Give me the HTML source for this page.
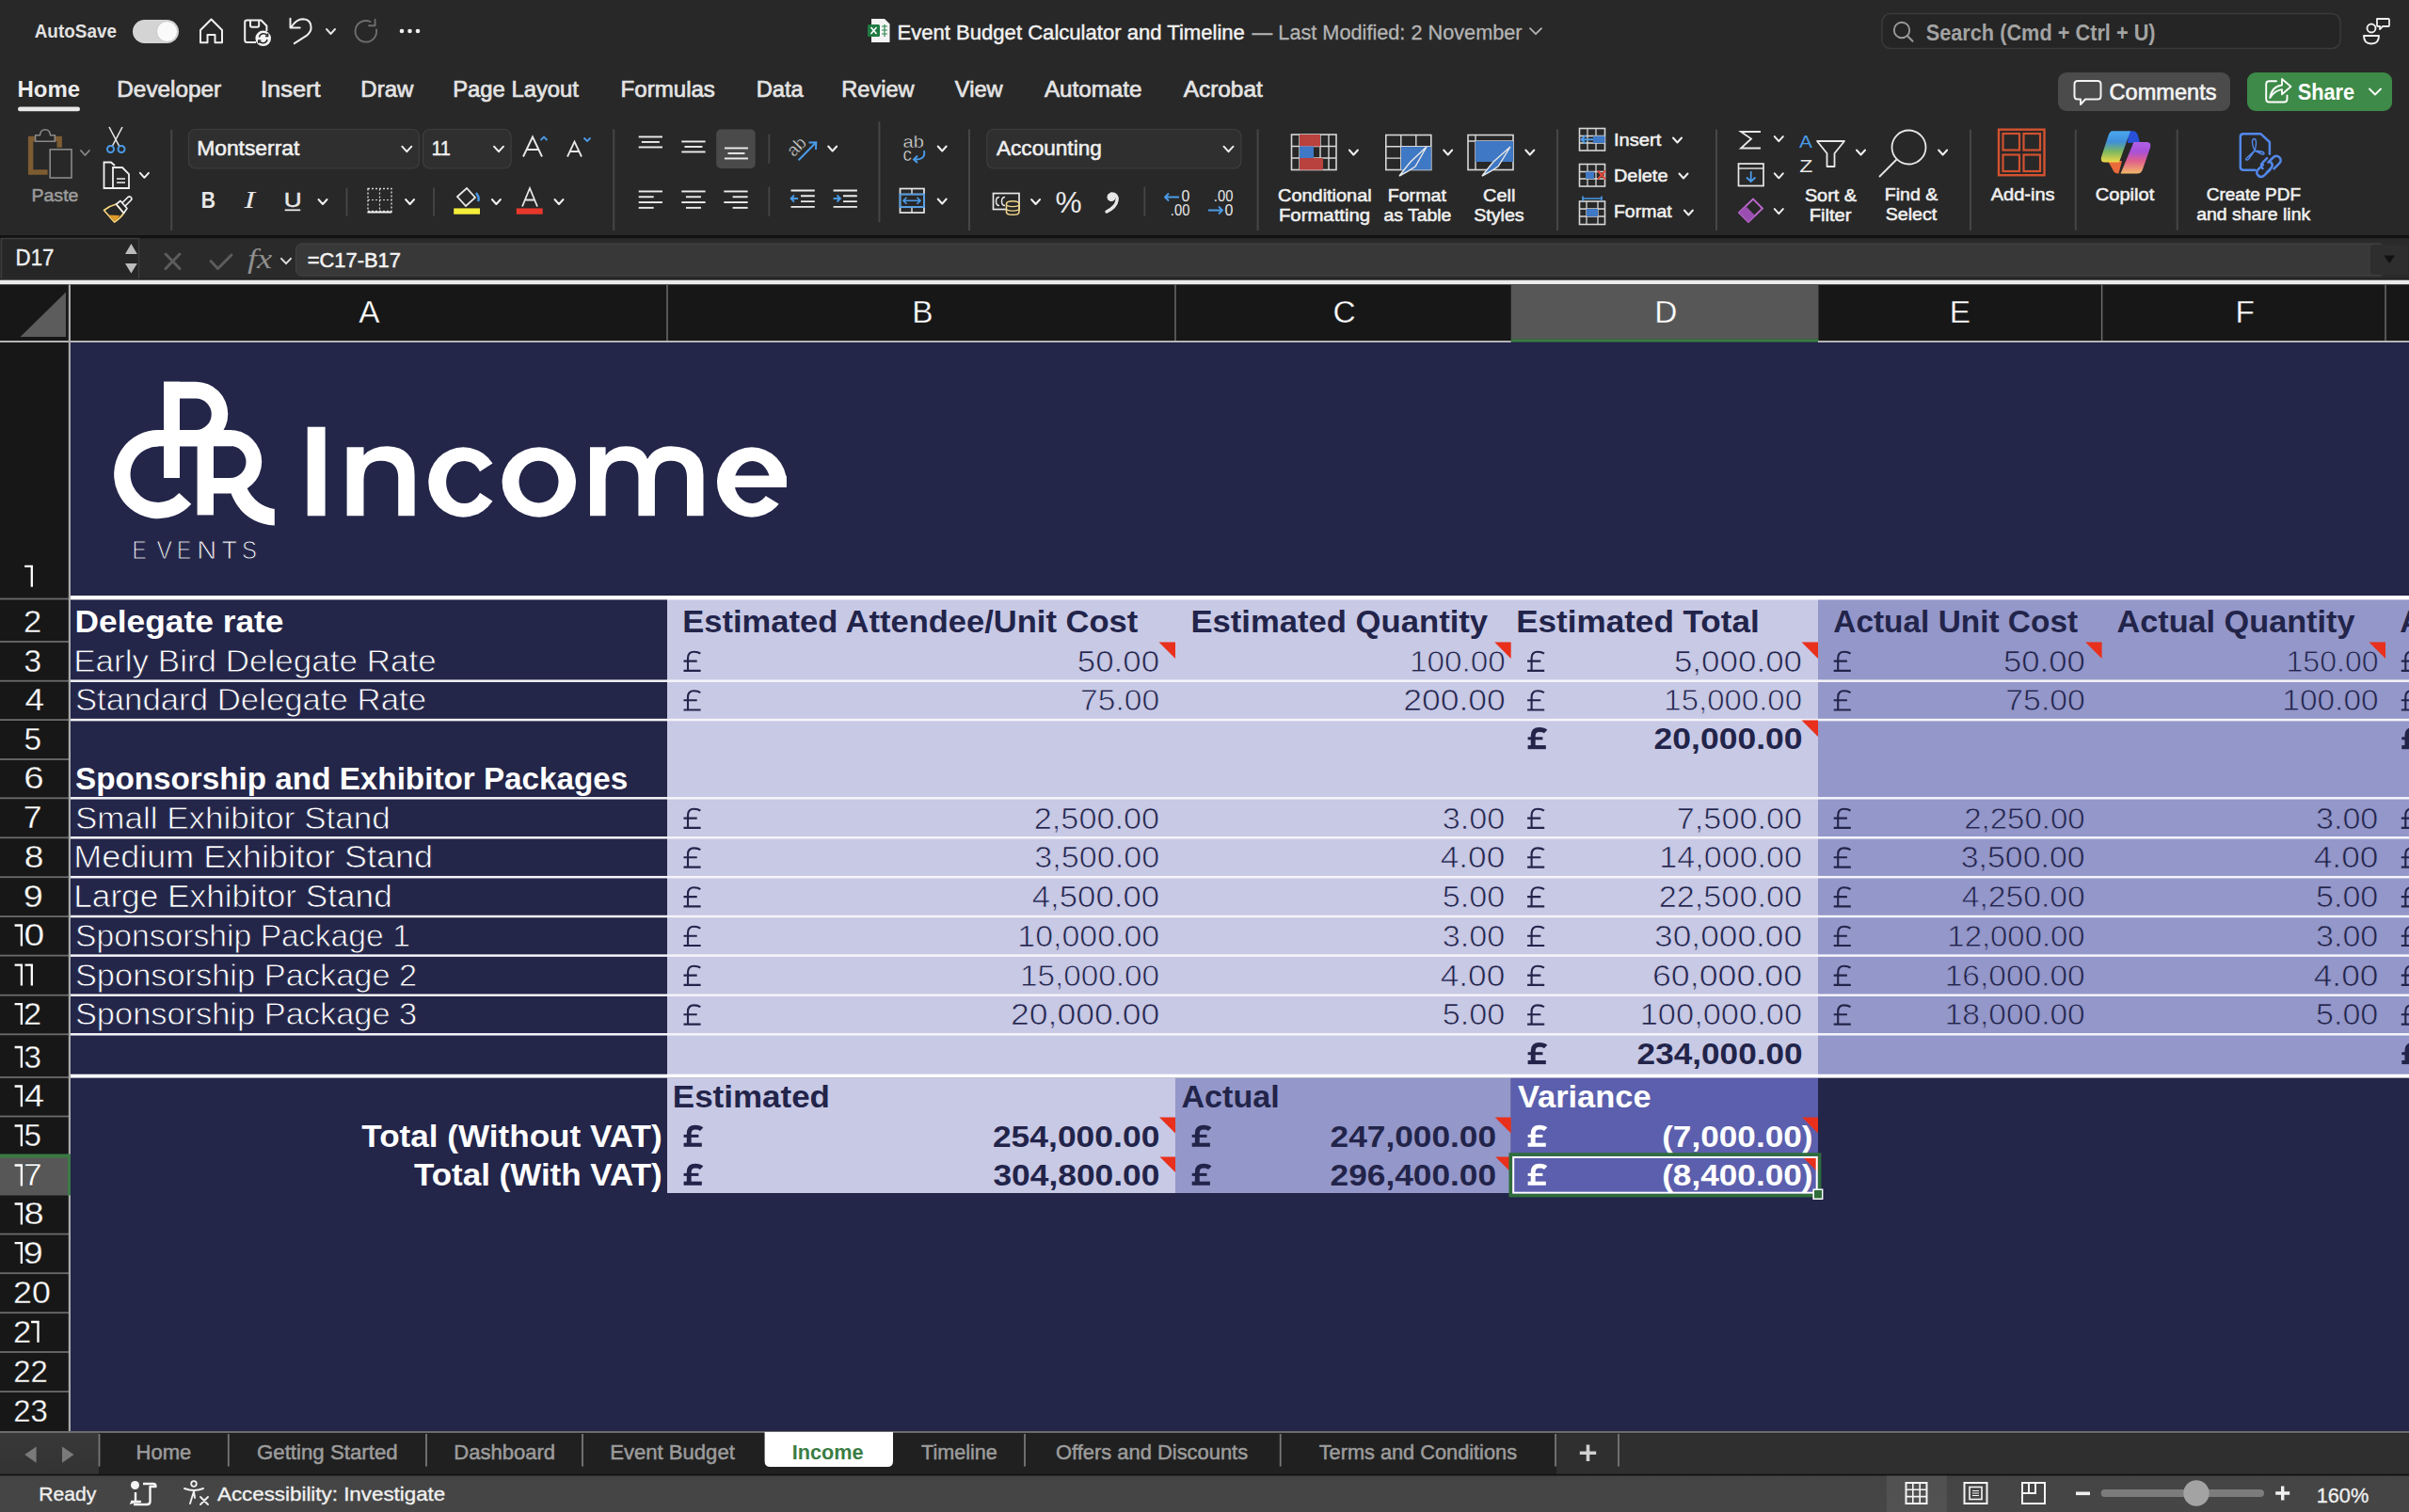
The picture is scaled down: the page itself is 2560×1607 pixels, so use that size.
<!DOCTYPE html>
<html><head><meta charset="utf-8"><title>Income - Excel</title>
<style>html,body{margin:0;padding:0;background:#282828;overflow:hidden;width:2560px;height:1607px}svg{display:block}</style></head>
<body><svg width="2560" height="1607" viewBox="0 0 2560 1607">
<rect x="0.00" y="0.00" width="2560.00" height="250.00" fill="#282828" />
<text transform="translate(36.70,40.00) scale(0.9369,1)" font-family='"Liberation Sans"' font-size="20.20" fill="#e2e2e2" font-weight="bold">AutoSave</text>
<rect x="141" y="21" width="49" height="25" rx="12.5" fill="#d4d4d4"/>
<circle cx="177.5" cy="33.5" r="11" fill="#fafafa" stroke="#bdbdbd" stroke-width="0.8"/>
<path d="M213,45.3 L213,32 L224.5,20.5 L236,32 L236,45.3 L228.5,45.3 L228.5,37 L220.5,37 L220.5,45.3 Z" fill="none" stroke="#f0f0f0" stroke-width="2" stroke-linejoin="round"/>
<path d="M272,45 L262.5,45 Q260.2,45 260.2,42.5 L260.2,23.8 Q260.2,21.5 262.5,21.5 L277.5,21.5 L283.4,27.5 L283.4,33" fill="none" stroke="#f0f0f0" stroke-width="2" stroke-linejoin="round"/><path d="M266,21.5 L266,27 Q266,28.7 267.7,28.7 L273.5,28.7 Q275.2,28.7 275.2,27 L275.2,21.5" fill="none" stroke="#f0f0f0" stroke-width="2"/><circle cx="279.7" cy="40.8" r="8.3" fill="#f4f4f4"/><path d="M275.4,39.5 Q276.5,35.8 280,35.8 Q282.5,35.8 283.8,37.5 M284,42 Q282.9,45.8 279.4,45.8 Q276.9,45.8 275.6,44.1" fill="none" stroke="#282828" stroke-width="1.6"/><path d="M282,38.6 L284.6,38.6 L284.6,35.6 M277.4,43 L274.8,43 L274.8,46" fill="none" stroke="#282828" stroke-width="1.5"/>
<path d="M308.5,19.7 L308.5,29.4 L318.7,29.4 M309.5,28.8 Q315,20.3 322,20.3 Q330.6,20.6 330.6,29.5 Q330.6,33.5 326.5,37.3 L312.8,46.2" fill="none" stroke="#f0f0f0" stroke-width="2" stroke-linecap="round" stroke-linejoin="round"/>
<path d="M347.0,31.0 L351.5,36.0 L356.0,31.0" fill="none" stroke="#e0e0e0" stroke-width="2" stroke-linecap="round" stroke-linejoin="round"/>
<path d="M400,31.5 A11.3,11.3 0 1 1 393.5,23" fill="none" stroke="#6e6e6e" stroke-width="1.9" stroke-linecap="round"/><path d="M398.6,20.8 L398.6,27.3 L392.1,27.3" fill="none" stroke="#6e6e6e" stroke-width="1.9" stroke-linecap="round" stroke-linejoin="round"/>
<circle cx="427" cy="33" r="2.3" fill="#f0f0f0"/>
<circle cx="435.5" cy="33" r="2.3" fill="#f0f0f0"/>
<circle cx="444" cy="33" r="2.3" fill="#f0f0f0"/>
<path d="M926,20 L940,20 L945.5,25.5 L945.5,45 L926,45 Z" fill="#f4f4f4"/><rect x="922" y="26" width="13" height="13" rx="1.5" fill="#1f7a43"/><path d="M925.5,29 L931.5,36 M931.5,29 L925.5,36" stroke="#fff" stroke-width="1.6"/><path d="M937,28 h6 M937,32 h6 M937,36 h6 M940,26 v13" stroke="#2d8a4e" stroke-width="1.2"/>
<text transform="translate(953.47,41.50) scale(0.9833,1)" font-family='"Liberation Sans"' font-size="22.47" fill="#f2f2f2" stroke="#f2f2f2" stroke-width="0.45">Event Budget Calculator and Timeline</text>
<text transform="translate(1330.60,41.50) scale(0.9662,1)" font-family='"Liberation Sans"' font-size="22.47" fill="#b4b4b4" stroke="#b4b4b4" stroke-width="0.3">— Last Modified: 2 November</text>
<path d="M1626.0,30.2 L1632.0,36.2 L1638.0,30.2" fill="none" stroke="#b4b4b4" stroke-width="1.8" stroke-linecap="round" stroke-linejoin="round"/>
<rect x="2000" y="14.5" width="487" height="37" rx="9" fill="#252525" stroke="#3a3a3a" stroke-width="1.5"/>
<circle cx="2021" cy="32" r="8.2" fill="none" stroke="#9a9a9a" stroke-width="1.9"/><path d="M2026.8,38 L2032.5,43.8" stroke="#9a9a9a" stroke-width="2" stroke-linecap="round"/>
<text transform="translate(2046.66,42.90) scale(0.9102,1)" font-family='"Liberation Sans"' font-size="23.89" fill="#a3a3a3" font-weight="bold">Search (Cmd + Ctrl + U)</text>
<circle cx="2520" cy="30" r="4.5" fill="none" stroke="#f0f0f0" stroke-width="1.9"/><path d="M2512,38 L2528,38 Q2528,46.5 2520,46.5 Q2512,46.5 2512,38 Z" fill="none" stroke="#f0f0f0" stroke-width="1.9" stroke-linejoin="round"/><path d="M2526,20 L2538,20 Q2539,20 2539,21 L2539,27 Q2539,28 2538,28 L2532,28 L2529,31 L2529,28 L2527,28 Q2526,28 2526,27 Z" fill="none" stroke="#f0f0f0" stroke-width="1.8" stroke-linejoin="round"/>
<text transform="translate(18.50,103.00) scale(0.9914,1)" font-family='"Liberation Sans"' font-size="24.18" fill="#ececec" font-weight="bold">Home</text>
<text transform="translate(124.30,103.00) scale(1.0065,1)" font-family='"Liberation Sans"' font-size="24.18" fill="#e4e4e4" stroke="#e4e4e4" stroke-width="0.7">Developer</text>
<text transform="translate(277.02,103.00) scale(1.0501,1)" font-family='"Liberation Sans"' font-size="24.18" fill="#e4e4e4" stroke="#e4e4e4" stroke-width="0.7">Insert</text>
<text transform="translate(383.32,103.00) scale(0.9941,1)" font-family='"Liberation Sans"' font-size="24.18" fill="#e4e4e4" stroke="#e4e4e4" stroke-width="0.7">Draw</text>
<text transform="translate(481.14,103.00) scale(0.9853,1)" font-family='"Liberation Sans"' font-size="24.18" fill="#e4e4e4" stroke="#e4e4e4" stroke-width="0.7">Page Layout</text>
<text transform="translate(659.62,103.00) scale(0.9958,1)" font-family='"Liberation Sans"' font-size="24.18" fill="#e4e4e4" stroke="#e4e4e4" stroke-width="0.7">Formulas</text>
<text transform="translate(803.75,103.00) scale(0.9790,1)" font-family='"Liberation Sans"' font-size="24.18" fill="#e4e4e4" stroke="#e4e4e4" stroke-width="0.7">Data</text>
<text transform="translate(894.36,103.00) scale(0.9745,1)" font-family='"Liberation Sans"' font-size="24.18" fill="#e4e4e4" stroke="#e4e4e4" stroke-width="0.7">Review</text>
<text transform="translate(1014.80,103.00) scale(0.9777,1)" font-family='"Liberation Sans"' font-size="24.18" fill="#e4e4e4" stroke="#e4e4e4" stroke-width="0.7">View</text>
<text transform="translate(1110.00,103.00)" font-family='"Liberation Sans"' font-size="24.18" fill="#e4e4e4" stroke="#e4e4e4" stroke-width="0.7">Automate</text>
<text transform="translate(1257.70,103.00) scale(1.0095,1)" font-family='"Liberation Sans"' font-size="24.18" fill="#e4e4e4" stroke="#e4e4e4" stroke-width="0.7">Acrobat</text>
<rect x="19" y="113.6" width="66" height="4.6" rx="2.3" fill="#e8e8e8"/>
<rect x="2187" y="77" width="183" height="41" rx="9" fill="#4b4b4b"/>
<path d="M2208,86 L2229,86 Q2232.5,86 2232.5,89.5 L2232.5,102 Q2232.5,105.5 2229,105.5 L2216,105.5 L2211,111 L2211,105.5 L2208,105.5 Q2204.5,105.5 2204.5,102 L2204.5,89.5 Q2204.5,86 2208,86 Z" fill="none" stroke="#f2f2f2" stroke-width="2" stroke-linejoin="round"/>
<text transform="translate(2241.60,106.10) scale(1.0167,1)" font-family='"Liberation Sans"' font-size="23.18" fill="#f4f4f4" stroke="#f4f4f4" stroke-width="0.6">Comments</text>
<rect x="2388" y="77" width="154" height="41" rx="9" fill="#3e8a48"/>
<path d="M2419,86.3 L2411.5,86.3 Q2408.2,86.3 2408.2,89.6 L2408.2,105.2 Q2408.2,108.5 2411.5,108.5 L2427.2,108.5 Q2430.5,108.5 2430.5,105.2 L2430.5,101.5" fill="none" stroke="#fff" stroke-width="1.9" stroke-linecap="round"/><path d="M2412.3,104 Q2414,92 2425,90.5 L2425,84 L2434.5,92 L2425,100.3 L2425,95.2 Q2417.5,96 2412.3,104 Z" fill="none" stroke="#fff" stroke-width="1.8" stroke-linejoin="round"/>
<text transform="translate(2441.66,106.10) scale(0.9403,1)" font-family='"Liberation Sans"' font-size="23.18" fill="#ffffff" font-weight="bold">Share</text>
<path d="M2518.0,94.5 L2524.0,100.5 L2530.0,94.5" fill="none" stroke="#ffffff" stroke-width="1.8" stroke-linecap="round" stroke-linejoin="round"/>
<path d="M37.5,147.5 L32.6,147.5 L32.6,183 L50.6,183 M58.5,147.5 L63.2,147.5 L63.2,156.7" fill="none" stroke="#7d5c32" stroke-width="5.4"/>
<path d="M37.6,150.2 L37.6,143.8 L42.5,143.8 Q43,137.8 48,137.8 Q53,137.8 53.5,143.8 L58.3,143.8 L58.3,150.2 Z" fill="#282828" stroke="#8a8a8a" stroke-width="1.5"/><rect x="53.2" y="158.8" width="22.8" height="30.2" fill="#282828" stroke="#8a8a8a" stroke-width="1.6"/>
<path d="M85.9,160.0 L90.4,165.0 L94.9,160.0" fill="none" stroke="#8a8a8a" stroke-width="1.8" stroke-linecap="round" stroke-linejoin="round"/>
<text transform="translate(33.47,214.00) scale(1.0745,1)" font-family='"Liberation Sans"' font-size="18.20" fill="#9c9c9c" stroke="#9c9c9c" stroke-width="0.5">Paste</text>
<path d="M116,135 L126.5,155 M130,135 L119.5,155" stroke="#e8e8e8" stroke-width="1.6"/><circle cx="117.5" cy="158.5" r="3.5" fill="none" stroke="#4a9be8" stroke-width="2"/><circle cx="129" cy="158.5" r="3.5" fill="none" stroke="#4a9be8" stroke-width="2"/>
<path d="M121,200 L110.5,200 L110.5,172.5 L118,172.5 L122,176" fill="none" stroke="#f0f0f0" stroke-width="1.8"/><path d="M120,178 L130,178 L137,185 L137,200 L120,200 Z" fill="#282828" stroke="#f0f0f0" stroke-width="1.8"/><path d="M124,190 h9 M124,194 h9" stroke="#f0f0f0" stroke-width="1.4"/>
<path d="M148.9,183.8 L153.4,188.8 L157.9,183.8" fill="none" stroke="#f0f0f0" stroke-width="2" stroke-linecap="round" stroke-linejoin="round"/>
<path d="M110.5,223.5 Q117,218.5 123.5,217 L131.5,226.5 Q128,232 121.5,236 Z" fill="none" stroke="#f2d27a" stroke-width="1.7" stroke-linejoin="round"/><path d="M115.5,228.5 L127.5,229 Q125,233 121.5,235 Z" fill="#e09a2a"/><path d="M123.5,217 L128,213.5 L135,221.5 L131.5,226.5 Z" fill="none" stroke="#f0f0f0" stroke-width="1.7" stroke-linejoin="round"/><path d="M129.5,216 L136,209.5 Q138,208 139.5,210 Q140.5,211.5 139,213 L132.5,219.5" fill="none" stroke="#f0f0f0" stroke-width="1.7" stroke-linejoin="round"/>
<rect x="181.20" y="138.00" width="2.00" height="107.00" fill="#464646" />
<rect x="200.5" y="137.5" width="245" height="41.5" rx="7" fill="#2f2f2f" stroke="#3e3e3e" stroke-width="1.2"/>
<text transform="translate(209.22,165.20) scale(1.0560,1)" font-family='"Liberation Sans"' font-size="21.62" fill="#f0f0f0" stroke="#f0f0f0" stroke-width="0.55">Montserrat</text>
<path d="M427.3,155.7 L432.3,161.2 L437.3,155.7" fill="none" stroke="#f0f0f0" stroke-width="2" stroke-linecap="round" stroke-linejoin="round"/>
<rect x="449.5" y="137.5" width="93.5" height="41.5" rx="7" fill="#2f2f2f" stroke="#3e3e3e" stroke-width="1.2"/>
<text transform="translate(458.80,165.20) scale(0.8905,1)" font-family='"Liberation Sans"' font-size="21.62" fill="#f0f0f0" stroke="#f0f0f0" stroke-width="0.55">11</text>
<path d="M525.0,155.7 L530.0,161.2 L535.0,155.7" fill="none" stroke="#f0f0f0" stroke-width="2" stroke-linecap="round" stroke-linejoin="round"/>
<path d="M556,166.5 L566,145.5 L576,166.5 M559.5,159 L572.5,159" fill="none" stroke="#e8e8e8" stroke-width="1.9"/><path d="M574.5,149 L578,145.5 L581.5,149" fill="none" stroke="#4a9be8" stroke-width="1.8"/>
<path d="M603,166.5 L610.5,150.5 L618,166.5 M605.5,161 L615.5,161" fill="none" stroke="#e8e8e8" stroke-width="1.8"/><path d="M620.5,146.5 L624,150 L627.5,146.5" fill="none" stroke="#4a9be8" stroke-width="1.8"/>
<rect x="651.20" y="137.40" width="2.00" height="107.60" fill="#464646" />
<text transform="translate(213.68,220.80) scale(0.8735,1)" font-family='"Liberation Sans"' font-size="24.18" fill="#e8e8e8" font-weight="bold">B</text>
<text transform="translate(259.54,220.80) scale(1.3341,1)" font-family='"Liberation Serif"' font-size="25.90" fill="#e8e8e8" font-style="italic">I</text>
<text transform="translate(301.87,219.50) scale(1.1472,1)" font-family='"Liberation Sans"' font-size="22.76" fill="#e8e8e8" stroke="#e8e8e8" stroke-width="0.4">U</text>
<rect x="302.70" y="222.40" width="16.50" height="1.80" fill="#e8e8e8" />
<path d="M338.5,212.0 L343.0,217.0 L347.5,212.0" fill="none" stroke="#f0f0f0" stroke-width="2" stroke-linecap="round" stroke-linejoin="round"/>
<rect x="367.60" y="199.50" width="1.80" height="30.10" fill="#464646" />
<rect x="391" y="200.5" width="25" height="24" fill="none" stroke="#d8d8d8" stroke-width="1.4" stroke-dasharray="2 2"/><path d="M403.5,200.5 v24 M391,212.5 h25" stroke="#d8d8d8" stroke-width="1.2" stroke-dasharray="2 2"/><path d="M390.4,225.5 h26" stroke="#f0f0f0" stroke-width="2"/>
<path d="M431.1,212.0 L435.6,217.0 L440.1,212.0" fill="none" stroke="#f0f0f0" stroke-width="2" stroke-linecap="round" stroke-linejoin="round"/>
<rect x="460.20" y="199.50" width="1.80" height="30.10" fill="#464646" />
<path d="M486,209 L496,200 L505,210 L495,219 Z" fill="none" stroke="#e8e8e8" stroke-width="1.8"/><path d="M506,205 Q510,210 508,214" fill="none" stroke="#4a9be8" stroke-width="2.4"/>
<rect x="482.20" y="221.40" width="27.80" height="6.30" fill="#f5ee3a" />
<path d="M522.9,212.0 L527.4,217.0 L531.9,212.0" fill="none" stroke="#f0f0f0" stroke-width="2" stroke-linecap="round" stroke-linejoin="round"/>
<path d="M555,219.5 L563,200 L571,219.5 M558,212.5 L568,212.5" fill="none" stroke="#e8e8e8" stroke-width="1.8"/>
<rect x="548.80" y="221.40" width="27.90" height="6.30" fill="#e8382c" />
<path d="M589.5,212.0 L594.0,217.0 L598.5,212.0" fill="none" stroke="#f0f0f0" stroke-width="2" stroke-linecap="round" stroke-linejoin="round"/>
<rect x="678.70" y="144.50" width="25.30" height="1.90" fill="#ececec" />
<rect x="681.85" y="150.00" width="19.00" height="1.90" fill="#ececec" />
<rect x="678.70" y="155.50" width="25.30" height="1.90" fill="#ececec" />
<rect x="724.30" y="149.50" width="25.30" height="1.90" fill="#ececec" />
<rect x="727.45" y="155.00" width="19.00" height="1.90" fill="#ececec" />
<rect x="724.30" y="160.50" width="25.30" height="1.90" fill="#ececec" />
<rect x="761.2" y="137.4" width="41.5" height="41.6" rx="5" fill="#4a4a4a"/>
<rect x="769.95" y="156.50" width="25.00" height="1.90" fill="#ececec" />
<rect x="773.45" y="162.00" width="18.00" height="1.90" fill="#ececec" />
<rect x="769.95" y="167.50" width="25.00" height="1.90" fill="#ececec" />
<rect x="816.40" y="142.70" width="1.80" height="31.10" fill="#464646" />
<text x="0" y="0" transform="translate(843.5,167.5) rotate(-45)" font-family='"Liberation Sans"' font-size="18.5" fill="#e8e8e8" stroke="#282828" stroke-width="0.5">ab</text><path d="M848.6,170.2 L867,151.5 M859.5,151.5 L867.3,151.2 L867,159" fill="none" stroke="#4a9be8" stroke-width="2"/>
<path d="M880.2,155.5 L884.7,160.5 L889.2,155.5" fill="none" stroke="#f0f0f0" stroke-width="2" stroke-linecap="round" stroke-linejoin="round"/>
<rect x="933.40" y="129.30" width="2.00" height="106.90" fill="#464646" />
<text transform="translate(959.58,157.40) scale(1.0896,1)" font-family='"Liberation Sans"' font-size="18.35" fill="#e8e8e8" stroke="#282828" stroke-width="0.459">ab</text>
<text transform="translate(959.41,170.70) scale(0.9379,1)" font-family='"Liberation Sans"' font-size="20.00" fill="#e8e8e8" stroke="#282828" stroke-width="0.533">c</text>
<path d="M982,160 Q984,170 972,169.5 M975,165.5 L971,169.5 L975,173" fill="none" stroke="#4a9be8" stroke-width="1.9"/>
<path d="M996.7,155.5 L1001.2,160.5 L1005.7,155.5" fill="none" stroke="#f0f0f0" stroke-width="2" stroke-linecap="round" stroke-linejoin="round"/>
<rect x="678.70" y="202.50" width="25.30" height="1.90" fill="#ececec" />
<rect x="678.70" y="208.30" width="16.00" height="1.90" fill="#ececec" />
<rect x="678.70" y="214.10" width="25.30" height="1.90" fill="#ececec" />
<rect x="678.70" y="219.90" width="16.00" height="1.90" fill="#ececec" />
<rect x="724.30" y="202.50" width="25.30" height="1.90" fill="#ececec" />
<rect x="728.95" y="208.30" width="16.00" height="1.90" fill="#ececec" />
<rect x="724.30" y="214.10" width="25.30" height="1.90" fill="#ececec" />
<rect x="728.95" y="219.90" width="16.00" height="1.90" fill="#ececec" />
<rect x="769.30" y="202.50" width="25.30" height="1.90" fill="#ececec" />
<rect x="778.60" y="208.30" width="16.00" height="1.90" fill="#ececec" />
<rect x="769.30" y="214.10" width="25.30" height="1.90" fill="#ececec" />
<rect x="778.60" y="219.90" width="16.00" height="1.90" fill="#ececec" />
<rect x="816.40" y="198.50" width="1.80" height="31.30" fill="#464646" />
<path d="M840.5,202.5 h25.3 M851,208.3 h14.8 M851,214.1 h14.8 M840.5,219.9 h25.3" stroke="#ececec" stroke-width="1.9"/><path d="M848,211 h-7 M844,207.5 L840.5,211 L844,214.5" fill="none" stroke="#4a9be8" stroke-width="1.8"/>
<path d="M885.6,202.5 h25.3 M896,208.3 h14.8 M896,214.1 h14.8 M885.6,219.9 h25.3" stroke="#ececec" stroke-width="1.9"/><path d="M885.6,211 h7 M889.5,207.5 L893,211 L889.5,214.5" fill="none" stroke="#4a9be8" stroke-width="1.8"/>
<rect x="956.5" y="200.5" width="25.5" height="25.5" fill="none" stroke="#e8e8e8" stroke-width="1.7"/><path d="M956.5,206.5 h25.5 M956.5,220 h25.5 M969,200.5 v6 M969,220 v6" stroke="#e8e8e8" stroke-width="1.4"/><rect x="956.5" y="206.5" width="25.5" height="13.5" fill="none" stroke="#4a9be8" stroke-width="1.7"/><path d="M960,213.2 h18 M963.5,209.8 L960,213.2 L963.5,216.6 M974.5,209.8 L978,213.2 L974.5,216.6" fill="none" stroke="#4a9be8" stroke-width="1.6"/>
<path d="M996.7,211.5 L1001.2,216.5 L1005.7,211.5" fill="none" stroke="#f0f0f0" stroke-width="2" stroke-linecap="round" stroke-linejoin="round"/>
<rect x="1029.00" y="137.40" width="2.00" height="107.60" fill="#464646" />
<rect x="1048.8" y="137.5" width="270" height="41.5" rx="7" fill="#2f2f2f" stroke="#3e3e3e" stroke-width="1.2"/>
<text transform="translate(1059.00,165.20) scale(1.0450,1)" font-family='"Liberation Sans"' font-size="21.62" fill="#f0f0f0" stroke="#f0f0f0" stroke-width="0.55">Accounting</text>
<path d="M1300.5,155.7 L1305.5,161.2 L1310.5,155.7" fill="none" stroke="#f0f0f0" stroke-width="2" stroke-linecap="round" stroke-linejoin="round"/>
<rect x="1055.5" y="205.5" width="27.5" height="17" fill="none" stroke="#e8e8e8" stroke-width="1.7"/><path d="M1062,209.5 Q1058.5,209.5 1058.5,214 Q1058.5,218.5 1062,218.5 M1068,209.5 Q1064.5,209.5 1064.5,214 Q1064.5,218.5 1068,218.5" fill="none" stroke="#e8e8e8" stroke-width="1.5"/>
<path d="M1069.5,216.5 L1069.5,225.5 Q1069.5,228.3 1076.2,228.3 Q1082.9,228.3 1082.9,225.5 L1082.9,216.5 Q1082.9,213.7 1076.2,213.7 Q1069.5,213.7 1069.5,216.5 Z" fill="#282828" stroke="#f0d68a" stroke-width="1.6"/><path d="M1069.5,218.3 Q1076.2,221 1082.9,218.3 M1069.5,222.8 Q1076.2,225.5 1082.9,222.8" fill="none" stroke="#f0d68a" stroke-width="1.3"/>
<path d="M1096.1,212.0 L1100.6,217.0 L1105.1,212.0" fill="none" stroke="#f0f0f0" stroke-width="2" stroke-linecap="round" stroke-linejoin="round"/>
<text transform="translate(1121.41,226.00) scale(1.0111,1)" font-family='"Liberation Sans"' font-size="31.29" fill="#e8e8e8">%</text>
<path d="M1181,206 Q1188,206 1187,213 Q1186,220 1176,225" fill="none" stroke="#e8e8e8" stroke-width="3.4" stroke-linecap="round"/><circle cx="1181" cy="209.5" r="4.5" fill="#e8e8e8"/>
<rect x="1215.40" y="198.50" width="1.80" height="31.30" fill="#464646" />
<text transform="translate(1255.50,214.00) scale(1.0227,1)" font-family='"Liberation Sans"' font-size="15.64" fill="#e8e8e8">0</text>
<text transform="translate(1243.85,228.50) scale(0.9436,1)" font-family='"Liberation Sans"' font-size="15.64" fill="#e8e8e8">.00</text>
<path d="M1253,209.5 h-15 M1242,205.5 L1238,209.5 L1242,213.5" fill="none" stroke="#4a9be8" stroke-width="1.8"/>
<text transform="translate(1289.85,214.00) scale(0.9436,1)" font-family='"Liberation Sans"' font-size="15.64" fill="#e8e8e8">.00</text>
<text transform="translate(1301.50,228.50) scale(1.0227,1)" font-family='"Liberation Sans"' font-size="15.64" fill="#e8e8e8">0</text>
<path d="M1284,223.5 h15 M1295,219.5 L1299,223.5 L1295,227.5" fill="none" stroke="#4a9be8" stroke-width="1.8"/>
<rect x="1335.60" y="137.40" width="2.00" height="107.60" fill="#464646" />
<rect x="1372.5" y="143" width="47.5" height="37.5" fill="none" stroke="#d8d8d8" stroke-width="1.6"/><path d="M1381,143 v37.5 M1403,143 v37.5 M1412,143 v37.5 M1372.5,155.5 h47.5 M1372.5,168 h47.5" stroke="#d8d8d8" stroke-width="1.4"/><rect x="1381" y="143" width="22" height="12.5" fill="#b9413e"/><rect x="1381" y="155.5" width="15" height="12.5" fill="#3f78c4"/><rect x="1381" y="168" width="25" height="12.5" fill="#b9413e"/>
<path d="M1433.9,159.5 L1438.4,164.5 L1442.9,159.5" fill="none" stroke="#f0f0f0" stroke-width="2" stroke-linecap="round" stroke-linejoin="round"/>
<text transform="translate(1358.07,214.40) scale(1.0529,1)" font-family='"Liberation Sans"' font-size="18.92" fill="#f0f0f0" stroke="#f0f0f0" stroke-width="0.55">Conditional</text>
<text transform="translate(1358.91,234.80) scale(1.0755,1)" font-family='"Liberation Sans"' font-size="18.92" fill="#f0f0f0" stroke="#f0f0f0" stroke-width="0.55">Formatting</text>
<rect x="1472.8" y="143.5" width="48" height="37" fill="none" stroke="#d8d8d8" stroke-width="1.6"/><path d="M1488.8,143.5 v37 M1504.8,143.5 v37 M1472.8,155.8 h48 M1472.8,168.1 h48" stroke="#d8d8d8" stroke-width="1.4"/><rect x="1489" y="156" width="31.8" height="24.5" fill="#3f78c4"/><path d="M1516,156 L1504,177 Q1497,182 1487,187 Q1494,178 1499,172 Z" fill="#3f78c4" stroke="#e8e8e8" stroke-width="1.4"/>
<path d="M1534.2,159.5 L1538.7,164.5 L1543.2,159.5" fill="none" stroke="#f0f0f0" stroke-width="2" stroke-linecap="round" stroke-linejoin="round"/>
<text transform="translate(1474.66,214.40) scale(1.0395,1)" font-family='"Liberation Sans"' font-size="18.92" fill="#f0f0f0" stroke="#f0f0f0" stroke-width="0.55">Format</text>
<text transform="translate(1470.39,234.80) scale(1.0276,1)" font-family='"Liberation Sans"' font-size="18.92" fill="#f0f0f0" stroke="#f0f0f0" stroke-width="0.55">as Table</text>
<rect x="1560" y="143.5" width="48" height="37" fill="none" stroke="#d8d8d8" stroke-width="1.6"/><path d="M1568,143.5 v37 M1560,150 h48" stroke="#d8d8d8" stroke-width="1.4"/><rect x="1568" y="150" width="40" height="22" fill="#3f78c4"/><path d="M1605,156 L1592,177 Q1585,182 1575,187 Q1582,178 1587,172 Z" fill="#3f78c4" stroke="#e8e8e8" stroke-width="1.4"/>
<path d="M1621.3,159.5 L1625.8,164.5 L1630.3,159.5" fill="none" stroke="#f0f0f0" stroke-width="2" stroke-linecap="round" stroke-linejoin="round"/>
<text transform="translate(1576.07,214.40) scale(1.0509,1)" font-family='"Liberation Sans"' font-size="18.92" fill="#f0f0f0" stroke="#f0f0f0" stroke-width="0.55">Cell</text>
<text transform="translate(1566.19,234.80) scale(1.0372,1)" font-family='"Liberation Sans"' font-size="18.92" fill="#f0f0f0" stroke="#f0f0f0" stroke-width="0.55">Styles</text>
<rect x="1654.00" y="137.40" width="2.00" height="107.60" fill="#464646" />
<rect x="1678.5" y="136.5" width="27" height="23.5" fill="none" stroke="#d8d8d8" stroke-width="1.6"/><path d="M1678.5,144.5 h27 M1678.5,152 h27 M1687,136.5 v23.5 M1696,136.5 v23.5" stroke="#d8d8d8" stroke-width="1.3"/><rect x="1693" y="144.5" width="12.5" height="7.5" fill="#3f78c4"/><path d="M1693,148.3 h-12 M1685,144 L1680.5,148.3 L1685,152.5" fill="none" stroke="#4a9be8" stroke-width="1.9"/>
<text transform="translate(1714.93,154.90) scale(1.0633,1)" font-family='"Liberation Sans"' font-size="18.92" fill="#f0f0f0" stroke="#f0f0f0" stroke-width="0.55">Insert</text>
<path d="M1778.0,146.5 L1782.5,151.5 L1787.0,146.5" fill="none" stroke="#f0f0f0" stroke-width="2" stroke-linecap="round" stroke-linejoin="round"/>
<rect x="1678.5" y="174.5" width="27" height="23.5" fill="none" stroke="#d8d8d8" stroke-width="1.6"/><path d="M1678.5,182.5 h27 M1678.5,190 h27 M1687,174.5 v23.5 M1696,174.5 v23.5" stroke="#d8d8d8" stroke-width="1.3"/><rect x="1685" y="182.5" width="9" height="7.5" fill="#3f78c4"/><path d="M1698,181.5 L1706,190.5 M1706,181.5 L1698,190.5" stroke="#e04a3a" stroke-width="2"/>
<text transform="translate(1714.94,192.70) scale(1.0528,1)" font-family='"Liberation Sans"' font-size="18.92" fill="#f0f0f0" stroke="#f0f0f0" stroke-width="0.55">Delete</text>
<path d="M1784.5,184.5 L1789.0,189.5 L1793.5,184.5" fill="none" stroke="#f0f0f0" stroke-width="2" stroke-linecap="round" stroke-linejoin="round"/>
<rect x="1678.5" y="214" width="27" height="24.5" fill="none" stroke="#d8d8d8" stroke-width="1.6"/><path d="M1678.5,222 h27 M1678.5,230 h27 M1686,214 v24.5 M1698,214 v24.5" stroke="#d8d8d8" stroke-width="1.3"/><rect x="1686" y="222" width="12" height="8" fill="#3f78c4"/><path d="M1682,211 h20 M1682,208.5 v5 M1702,208.5 v5" stroke="#4a9be8" stroke-width="1.6"/>
<text transform="translate(1714.98,231.30) scale(1.0292,1)" font-family='"Liberation Sans"' font-size="18.92" fill="#f0f0f0" stroke="#f0f0f0" stroke-width="0.55">Format</text>
<path d="M1789.9,223.5 L1794.4,228.5 L1798.9,223.5" fill="none" stroke="#f0f0f0" stroke-width="2" stroke-linecap="round" stroke-linejoin="round"/>
<rect x="1823.00" y="137.40" width="2.00" height="107.60" fill="#464646" />
<path d="M1871,140 L1850,140 L1861,147.5 L1850,157.5 L1871,157.5" fill="none" stroke="#e8e8e8" stroke-width="1.8"/>
<path d="M1885.8,145.1 L1890.3,150.1 L1894.8,145.1" fill="none" stroke="#f0f0f0" stroke-width="2" stroke-linecap="round" stroke-linejoin="round"/>
<rect x="1847.5" y="174" width="26.5" height="23.5" fill="none" stroke="#e8e8e8" stroke-width="1.7"/><path d="M1847.5,179 h26.5" stroke="#e8e8e8" stroke-width="1.4"/><path d="M1860.7,182 v11 M1856,188.5 L1860.7,193 L1865.4,188.5" fill="none" stroke="#4a9be8" stroke-width="1.8"/>
<path d="M1885.8,184.3 L1890.3,189.3 L1894.8,184.3" fill="none" stroke="#f0f0f0" stroke-width="2" stroke-linecap="round" stroke-linejoin="round"/>
<path d="M1848,226 L1863,211.5 L1873,221.5 L1858,236 Z" fill="none" stroke="#c06ad0" stroke-width="1.8"/><path d="M1848,226 L1855,219 L1865,229 L1858,236 Z" fill="#9a4fb0"/>
<path d="M1885.8,222.1 L1890.3,227.1 L1894.8,222.1" fill="none" stroke="#f0f0f0" stroke-width="2" stroke-linecap="round" stroke-linejoin="round"/>
<text transform="translate(1912.00,157.00) scale(1.0853,1)" font-family='"Liberation Sans"' font-size="19.20" fill="#4a9be8">A</text>
<text transform="translate(1912.28,183.00) scale(1.2037,1)" font-family='"Liberation Sans"' font-size="19.20" fill="#e8e8e8">Z</text>
<path d="M1931,150 L1960,150 L1949.5,163 L1949.5,177 L1941.5,177 L1941.5,163 Z" fill="none" stroke="#e8e8e8" stroke-width="1.8" stroke-linejoin="round"/>
<path d="M1973.0,159.5 L1977.5,164.5 L1982.0,159.5" fill="none" stroke="#f0f0f0" stroke-width="2" stroke-linecap="round" stroke-linejoin="round"/>
<text transform="translate(1917.88,214.40) scale(1.0489,1)" font-family='"Liberation Sans"' font-size="18.92" fill="#f0f0f0" stroke="#f0f0f0" stroke-width="0.55">Sort &amp;</text>
<text transform="translate(1922.73,234.80) scale(1.0627,1)" font-family='"Liberation Sans"' font-size="18.92" fill="#f0f0f0" stroke="#f0f0f0" stroke-width="0.55">Filter</text>
<circle cx="2028.5" cy="156.5" r="18" fill="none" stroke="#e8e8e8" stroke-width="1.8"/><path d="M2015.5,169.5 L1997,188" stroke="#e8e8e8" stroke-width="1.8"/>
<path d="M2060.1,159.5 L2064.6,164.5 L2069.1,159.5" fill="none" stroke="#f0f0f0" stroke-width="2" stroke-linecap="round" stroke-linejoin="round"/>
<text transform="translate(2002.77,213.20) scale(1.0323,1)" font-family='"Liberation Sans"' font-size="18.92" fill="#f0f0f0" stroke="#f0f0f0" stroke-width="0.55">Find &amp;</text>
<text transform="translate(2003.69,234.30) scale(1.0395,1)" font-family='"Liberation Sans"' font-size="18.92" fill="#f0f0f0" stroke="#f0f0f0" stroke-width="0.55">Select</text>
<rect x="2093.00" y="137.70" width="2.00" height="107.10" fill="#464646" />
<rect x="2124" y="137.7" width="48.5" height="48.5" fill="none" stroke="#d35230" stroke-width="2.4"/><rect x="2128.5" y="142" width="17.5" height="17.5" fill="none" stroke="#d35230" stroke-width="2.2"/><rect x="2150.5" y="142" width="17.5" height="17.5" fill="none" stroke="#d35230" stroke-width="2.2"/><rect x="2128.5" y="164.5" width="17.5" height="17.5" fill="none" stroke="#d35230" stroke-width="2.2"/><rect x="2150.5" y="164.5" width="17.5" height="17.5" fill="none" stroke="#d35230" stroke-width="2.2"/>
<text transform="translate(2115.70,213.20) scale(1.0591,1)" font-family='"Liberation Sans"' font-size="18.92" fill="#f0f0f0" stroke="#f0f0f0" stroke-width="0.55">Add-ins</text>
<rect x="2204.80" y="137.70" width="2.00" height="107.10" fill="#464646" />
<defs><linearGradient id="cpA" x1="0" y1="0" x2="0" y2="1"><stop offset="0" stop-color="#4aa8f0"/><stop offset="0.35" stop-color="#3f8fd8"/><stop offset="0.65" stop-color="#7cb860"/><stop offset="1" stop-color="#f0d848"/></linearGradient><linearGradient id="cpB" x1="0" y1="0" x2="0" y2="1"><stop offset="0" stop-color="#b060e8"/><stop offset="0.3" stop-color="#a850d8"/><stop offset="0.6" stop-color="#e0608a"/><stop offset="1" stop-color="#f4b868"/></linearGradient></defs>
<path d="M2262,139.2 L2266.5,139.2 Q2270.5,139.2 2272,144 L2274,151.5 L2261,152 Z" fill="#2850d8"/><path d="M2240,171 L2255,171 L2251.5,184.6 Q2246.5,184.6 2245,180 Z" fill="#ea6a3c"/>
<path d="M2245,139.2 L2264,139.2 L2252,172.6 L2237,172.6 Q2231.5,172.6 2233,167 L2240.5,144 Q2242,139.2 2245,139.2 Z" fill="url(#cpA)"/>
<path d="M2267.5,151 L2281.5,151 Q2286.5,151 2285,157 L2277,180 Q2275.5,184.6 2271,184.6 L2253.5,184.6 Z" fill="url(#cpB)"/>
<text transform="translate(2226.76,213.20) scale(1.0610,1)" font-family='"Liberation Sans"' font-size="18.92" fill="#f0f0f0" stroke="#f0f0f0" stroke-width="0.55">Copilot</text>
<rect x="2312.70" y="137.70" width="2.00" height="107.10" fill="#464646" />
<path d="M2396.6,180.7 L2384,180.7 Q2380.8,180.7 2380.8,177.5 L2380.8,145.5 Q2380.8,142.3 2384,142.3 L2402.6,142.3 L2411.9,151 L2411.9,163.8" fill="none" stroke="#5288ea" stroke-width="2.5" stroke-linecap="round" stroke-linejoin="round"/>
<path d="M2395.4,147.5 Q2393.3,147.5 2393.5,152 Q2394,156 2396,160 L2388,167.5 Q2386,169 2387,170 Q2388.5,170.5 2390,168.5 L2396,160 L2403,163.5 Q2405.5,164.8 2406,163.5 Q2406,161.5 2403,161 L2396,160 Q2397.5,156 2397.5,152 Q2397.5,147.5 2395.4,147.5 Z" fill="none" stroke="#5288ea" stroke-width="1.4" stroke-linejoin="round"/>
<path d="M2408.3,178 L2403.5,182.8 Q2400,186.3 2403.2,189.5 Q2406.4,192.7 2410,189.2 L2416,183.3 M2414,175.5 L2419,170.5 Q2422.5,167 2425.7,170.2 Q2428.9,173.4 2425.4,176.9 L2420,182.3 M2416.7,175.5 Q2420,178.7 2416.2,182.5 L2412,186.7 M2408,182.2 Q2404.8,179 2408.6,175.2 L2412.6,171.2" fill="none" stroke="#5288ea" stroke-width="2.5" stroke-linecap="round" transform="translate(-3.5,-3)"/>
<text transform="translate(2344.71,213.20) scale(1.0045,1)" font-family='"Liberation Sans"' font-size="18.92" fill="#f0f0f0" stroke="#f0f0f0" stroke-width="0.55">Create PDF</text>
<text transform="translate(2334.19,234.30) scale(1.0283,1)" font-family='"Liberation Sans"' font-size="18.92" fill="#f0f0f0" stroke="#f0f0f0" stroke-width="0.55">and share link</text>
<rect x="0.00" y="250.00" width="2560.00" height="3.50" fill="#121212" />
<rect x="0.00" y="253.50" width="2560.00" height="44.00" fill="#2a2a2a" />
<rect x="1.5" y="253.5" width="146" height="43" fill="#262626" stroke="#3c3c3c" stroke-width="1.5"/>
<text transform="translate(16.56,282.30) scale(0.9487,1)" font-family='"Liberation Sans"' font-size="23.47" fill="#f0f0f0" stroke="#f0f0f0" stroke-width="0.4">D17</text>
<path d="M133,270 L139.4,259 L145.8,270 Z M133,280 L145.8,280 L139.4,290.6 Z" fill="#bcbcbc"/>
<path d="M176,270 L191,285.5 M191,270 L176,285.5" stroke="#5c5c5c" stroke-width="3" stroke-linecap="round"/>
<path d="M224,277.5 L231.5,285.5 L246,271" fill="none" stroke="#5c5c5c" stroke-width="3" stroke-linecap="round" stroke-linejoin="round"/>
<text transform="translate(263.00,284.50) scale(1.1926,1)" font-family='"Liberation Serif"' font-size="30.48" fill="#8e8e8e" font-style="italic">fx</text>
<path d="M299.0,274.8 L304.0,280.2 L309.0,274.8" fill="none" stroke="#e0e0e0" stroke-width="1.9" stroke-linecap="round" stroke-linejoin="round"/>
<rect x="314.5" y="259" width="2220" height="34" rx="6" fill="#383838" stroke="#444" stroke-width="1"/>
<rect x="2519" y="260" width="40" height="32" rx="4" fill="#2e2e2e"/>
<path d="M2533.5,271.5 L2545,271.5 L2539.2,280 Z" fill="#111"/>
<text transform="translate(326.77,283.50) scale(0.9613,1)" font-family='"Liberation Sans"' font-size="22.76" fill="#f4f4f4" stroke="#f4f4f4" stroke-width="0.55">=C17-B17</text>
<rect x="0.00" y="297.30" width="2560.00" height="5.20" fill="#ebebeb" />
<rect x="0.00" y="296.30" width="2560.00" height="1.20" fill="#1a1a1a" />
<rect x="0.00" y="1521.00" width="2560.00" height="2.20" fill="#6c6c6c" />
<rect x="0.00" y="1523.00" width="2560.00" height="44.00" fill="#202020" />
<defs><linearGradient id="navg" x1="0" y1="0" x2="0" y2="1"><stop offset="0" stop-color="#383838"/><stop offset="1" stop-color="#333"/></linearGradient><linearGradient id="stg" x1="0" y1="0" x2="0" y2="1"><stop offset="0" stop-color="#444"/><stop offset="1" stop-color="#464646"/></linearGradient></defs>
<rect x="0.00" y="1523.00" width="105.00" height="44.00" fill="url(#navg)" />
<path d="M38.6,1537.4 L26.2,1546.1 L38.6,1554.8 Z M66,1537.4 L78.5,1546.1 L66,1554.8 Z" fill="#7a7a7a"/>
<rect x="1654.00" y="1523.20" width="906.00" height="43.60" fill="#2f2f2f" />
<rect x="104.60" y="1524.00" width="1.80" height="34.60" fill="#777777" />
<rect x="241.90" y="1524.00" width="1.80" height="34.60" fill="#777777" />
<rect x="452.10" y="1524.00" width="1.80" height="34.60" fill="#777777" />
<rect x="618.10" y="1524.00" width="1.80" height="34.60" fill="#777777" />
<rect x="1088.10" y="1524.00" width="1.80" height="34.60" fill="#777777" />
<rect x="1359.80" y="1524.00" width="1.80" height="34.60" fill="#777777" />
<rect x="1652.10" y="1524.00" width="1.80" height="34.60" fill="#777777" />
<rect x="1719.10" y="1524.00" width="1.80" height="34.60" fill="#777777" />
<text transform="translate(144.58,1551.30)" font-family='"Liberation Sans"' font-size="22.04" fill="#9c9c9c" stroke="#9c9c9c" stroke-width="0.5">Home</text>
<text transform="translate(272.96,1551.30) scale(1.0103,1)" font-family='"Liberation Sans"' font-size="22.04" fill="#9c9c9c" stroke="#9c9c9c" stroke-width="0.5">Getting Started</text>
<text transform="translate(482.28,1551.30)" font-family='"Liberation Sans"' font-size="22.04" fill="#9c9c9c" stroke="#9c9c9c" stroke-width="0.5">Dashboard</text>
<text transform="translate(648.27,1551.30) scale(1.0022,1)" font-family='"Liberation Sans"' font-size="22.04" fill="#9c9c9c" stroke="#9c9c9c" stroke-width="0.5">Event Budget</text>
<text transform="translate(979.06,1551.30) scale(0.9797,1)" font-family='"Liberation Sans"' font-size="22.04" fill="#9c9c9c" stroke="#9c9c9c" stroke-width="0.5">Timeline</text>
<text transform="translate(1121.97,1551.30) scale(0.9945,1)" font-family='"Liberation Sans"' font-size="22.04" fill="#9c9c9c" stroke="#9c9c9c" stroke-width="0.5">Offers and Discounts</text>
<text transform="translate(1401.66,1551.30) scale(0.9874,1)" font-family='"Liberation Sans"' font-size="22.04" fill="#9c9c9c" stroke="#9c9c9c" stroke-width="0.5">Terms and Conditions</text>
<path d="M812.6,1522 L949,1522 L949,1553 Q949,1559 943,1559 L818.6,1559 Q812.6,1559 812.6,1553 Z" fill="#ffffff"/>
<text transform="translate(841.65,1551.30) scale(0.9834,1)" font-family='"Liberation Sans"' font-size="22.04" fill="#3a7d44" font-weight="bold">Income</text>
<path d="M1687.5,1535.5 L1687.5,1553 M1678.8,1544.3 L1696.2,1544.3" stroke="#d0d0d0" stroke-width="3.6"/>
<rect x="0.00" y="1566.80" width="2560.00" height="1.80" fill="#121212" />
<rect x="0.00" y="1568.50" width="2560.00" height="38.50" fill="url(#stg)" />
<text transform="translate(41.35,1595.30) scale(1.0034,1)" font-family='"Liberation Sans"' font-size="21.05" fill="#f0f0f0" stroke="#f0f0f0" stroke-width="0.35">Ready</text>
<circle cx="143.5" cy="1578.5" r="4.5" fill="#f4f4f4"/><path d="M144,1586 L144,1596 M139,1596 L149,1596 Q139,1596 139,1598.5 M152,1577 L163,1577 Q165.5,1577 165.5,1580 L159.5,1580 L159.5,1596 Q159.5,1599 156,1599 L142,1599" fill="none" stroke="#f4f4f4" stroke-width="2.4" stroke-linejoin="round"/>
<circle cx="206" cy="1577" r="2.8" fill="none" stroke="#f0f0f0" stroke-width="1.8"/><path d="M196,1582 Q206,1586 216,1582 M206,1585 L202,1598 M206,1585 L207,1592 M213,1591 L221,1599 M221,1591 L213,1599" fill="none" stroke="#f0f0f0" stroke-width="1.9" stroke-linecap="round"/>
<text transform="translate(231.00,1595.30) scale(1.0626,1)" font-family='"Liberation Sans"' font-size="21.05" fill="#f0f0f0" stroke="#f0f0f0" stroke-width="0.35">Accessibility: Investigate</text>
<rect x="2004.80" y="1568.50" width="64.00" height="38.50" fill="#5a5a5a" opacity="0.6"/>
<rect x="2025.5" y="1576" width="22" height="22" fill="none" stroke="#f4f4f4" stroke-width="2"/><path d="M2032.8,1576 v22 M2040.2,1576 v22 M2025.5,1583.3 h22 M2025.5,1590.6 h22" stroke="#f4f4f4" stroke-width="1.6"/>
<rect x="2087.5" y="1576" width="24" height="22" fill="none" stroke="#f4f4f4" stroke-width="2"/><rect x="2093" y="1580.5" width="13" height="13" fill="none" stroke="#f4f4f4" stroke-width="1.6"/><path d="M2096,1584.5 h7 M2096,1587 h7 M2096,1589.5 h7" stroke="#f4f4f4" stroke-width="1.2"/>
<path d="M2149,1576 h24 v22 h-24 Z M2156,1576 v11 h7 v-11 M2149,1587 h14" fill="none" stroke="#f4f4f4" stroke-width="2"/>
<rect x="2206.00" y="1585.50" width="15.00" height="3.60" fill="#f0f0f0" />
<rect x="2232.7" y="1583" width="173.3" height="8" rx="4" fill="#7c7c7c"/>
<circle cx="2334" cy="1587" r="13.7" fill="#a3a3a3"/>
<path d="M2425.7,1579.5 v15 M2418.2,1587 h15" stroke="#f0f0f0" stroke-width="3.4"/>
<text transform="translate(2461.64,1596.50) scale(0.9881,1)" font-family='"Liberation Sans"' font-size="22.04" fill="#f0f0f0" stroke="#f0f0f0" stroke-width="0.3">160%</text>
<rect x="0.00" y="302.50" width="2560.00" height="60.50" fill="#171717" />
<rect x="0.00" y="363.00" width="75.00" height="1158.00" fill="#171717" />
<rect x="75.00" y="363.00" width="2485.00" height="1158.00" fill="#232549" />
<rect x="709.00" y="637.00" width="1223.00" height="505.00" fill="#c8c9e5" />
<rect x="1932.00" y="637.00" width="628.00" height="505.00" fill="#9497c9" />
<rect x="709.00" y="1145.60" width="540.00" height="122.40" fill="#c8c9e5" />
<rect x="1249.00" y="1145.60" width="356.70" height="122.40" fill="#9497c9" />
<rect x="1605.70" y="1145.60" width="326.30" height="122.40" fill="#5b5fad" />
<rect x="75.00" y="633.00" width="2485.00" height="4.40" fill="#ffffff" />
<rect x="75.00" y="1141.70" width="2485.00" height="3.90" fill="#ffffff" />
<rect x="75.00" y="722.45" width="2485.00" height="2.50" fill="#f4f4fa" />
<rect x="75.00" y="763.85" width="2485.00" height="2.50" fill="#f4f4fa" />
<rect x="75.00" y="847.05" width="2485.00" height="2.50" fill="#f4f4fa" />
<rect x="75.00" y="889.05" width="2485.00" height="2.50" fill="#f4f4fa" />
<rect x="75.00" y="930.95" width="2485.00" height="2.50" fill="#f4f4fa" />
<rect x="75.00" y="972.75" width="2485.00" height="2.50" fill="#f4f4fa" />
<rect x="75.00" y="1014.35" width="2485.00" height="2.50" fill="#f4f4fa" />
<rect x="75.00" y="1056.45" width="2485.00" height="2.50" fill="#f4f4fa" />
<rect x="75.00" y="1098.05" width="2485.00" height="2.50" fill="#f4f4fa" />
<rect x="1605.70" y="302.50" width="326.80" height="58.00" fill="#575757" />
<rect x="1605.70" y="360.30" width="326.80" height="3.20" fill="#3b7a45" />
<rect x="708.25" y="302.50" width="1.50" height="60.50" fill="#6b6b6b" />
<rect x="1248.25" y="302.50" width="1.50" height="60.50" fill="#6b6b6b" />
<rect x="2232.85" y="302.50" width="1.50" height="60.50" fill="#6b6b6b" />
<rect x="2534.25" y="302.50" width="1.50" height="60.50" fill="#6b6b6b" />
<rect x="0.00" y="362.00" width="1605.70" height="2.00" fill="#b4b4b4" />
<rect x="1932.00" y="362.00" width="628.00" height="2.00" fill="#b4b4b4" />
<path d="M21.6,358 L70,310.6 L70,358 Z" fill="#5c5c5c"/>
<rect x="0.00" y="1228.50" width="73.00" height="42.00" fill="#575757" />
<rect x="0.00" y="1226.50" width="75.00" height="4.00" fill="#3b7a45" />
<rect x="72.00" y="1226.50" width="3.00" height="44.00" fill="#3b7a45" />
<rect x="0.00" y="635.60" width="73.00" height="1.80" fill="#6b6b6b" />
<rect x="0.00" y="681.10" width="73.00" height="1.80" fill="#6b6b6b" />
<rect x="0.00" y="722.80" width="73.00" height="1.80" fill="#6b6b6b" />
<rect x="0.00" y="764.20" width="73.00" height="1.80" fill="#6b6b6b" />
<rect x="0.00" y="806.10" width="73.00" height="1.80" fill="#6b6b6b" />
<rect x="0.00" y="847.40" width="73.00" height="1.80" fill="#6b6b6b" />
<rect x="0.00" y="889.40" width="73.00" height="1.80" fill="#6b6b6b" />
<rect x="0.00" y="931.30" width="73.00" height="1.80" fill="#6b6b6b" />
<rect x="0.00" y="973.10" width="73.00" height="1.80" fill="#6b6b6b" />
<rect x="0.00" y="1014.70" width="73.00" height="1.80" fill="#6b6b6b" />
<rect x="0.00" y="1056.80" width="73.00" height="1.80" fill="#6b6b6b" />
<rect x="0.00" y="1098.40" width="73.00" height="1.80" fill="#6b6b6b" />
<rect x="0.00" y="1144.10" width="73.00" height="1.80" fill="#6b6b6b" />
<rect x="0.00" y="1185.60" width="73.00" height="1.80" fill="#6b6b6b" />
<rect x="0.00" y="1310.70" width="73.00" height="1.80" fill="#6b6b6b" />
<rect x="0.00" y="1352.30" width="73.00" height="1.80" fill="#6b6b6b" />
<rect x="0.00" y="1394.30" width="73.00" height="1.80" fill="#6b6b6b" />
<rect x="0.00" y="1436.10" width="73.00" height="1.80" fill="#6b6b6b" />
<rect x="0.00" y="1478.10" width="73.00" height="1.80" fill="#6b6b6b" />
<rect x="72.80" y="302.50" width="2.20" height="1218.50" fill="#a8a8a8" />
<rect x="72.00" y="1226.50" width="3.00" height="44.00" fill="#3b7a45" />
<text transform="translate(381.37,343.20)" font-family='"Liberation Sans"' font-size="33.42" fill="#ffffff" stroke="#171717" stroke-width="0.350">A</text>
<text transform="translate(969.25,343.20)" font-family='"Liberation Sans"' font-size="33.42" fill="#ffffff" stroke="#171717" stroke-width="0.350">B</text>
<text transform="translate(1416.53,343.20)" font-family='"Liberation Sans"' font-size="33.42" fill="#ffffff" stroke="#171717" stroke-width="0.350">C</text>
<text transform="translate(1758.21,343.20)" font-family='"Liberation Sans"' font-size="33.42" fill="#ffffff" stroke="#575757" stroke-width="0.350">D</text>
<text transform="translate(2071.75,343.20)" font-family='"Liberation Sans"' font-size="33.42" fill="#ffffff" stroke="#171717" stroke-width="0.350">E</text>
<text transform="translate(2375.53,343.20)" font-family='"Liberation Sans"' font-size="33.42" fill="#ffffff" stroke="#171717" stroke-width="0.350">F</text>
<path d="M26.2,601.9 L33.8,601.9 L33.8,623.7" fill="none" stroke="#ffffff" stroke-width="2.3"/>
<text transform="translate(24.88,671.80) scale(1.0565,1)" font-family='"Liberation Sans"' font-size="32.71" fill="#ffffff" stroke="#171717" stroke-width="0.331">2</text>
<text transform="translate(25.45,713.50) scale(1.0224,1)" font-family='"Liberation Sans"' font-size="32.71" fill="#ffffff" stroke="#171717" stroke-width="0.342">3</text>
<text transform="translate(26.42,754.90) scale(1.1324,1)" font-family='"Liberation Sans"' font-size="32.71" fill="#ffffff" stroke="#171717" stroke-width="0.309">4</text>
<text transform="translate(25.45,796.80) scale(1.0224,1)" font-family='"Liberation Sans"' font-size="32.71" fill="#ffffff" stroke="#171717" stroke-width="0.342">5</text>
<text transform="translate(25.20,838.10) scale(1.1739,1)" font-family='"Liberation Sans"' font-size="32.71" fill="#ffffff" stroke="#171717" stroke-width="0.298">6</text>
<text transform="translate(24.83,880.10) scale(1.0891,1)" font-family='"Liberation Sans"' font-size="32.71" fill="#ffffff" stroke="#171717" stroke-width="0.321">7</text>
<text transform="translate(25.84,922.00) scale(1.1360,1)" font-family='"Liberation Sans"' font-size="32.71" fill="#ffffff" stroke="#171717" stroke-width="0.308">8</text>
<text transform="translate(24.72,963.80) scale(1.1609,1)" font-family='"Liberation Sans"' font-size="32.71" fill="#ffffff" stroke="#171717" stroke-width="0.301">9</text>
<path d="M15.6,983.5 L22.9,983.5 L22.9,1005.4" fill="none" stroke="#ffffff" stroke-width="2.3"/>
<text transform="translate(25.38,1005.40) scale(1.1923,1)" font-family='"Liberation Sans"' font-size="32.71" fill="#ffffff" stroke="#171717" stroke-width="0.294">0</text>
<path d="M15.6,1025.7 L22.9,1025.7 L22.9,1047.5" fill="none" stroke="#ffffff" stroke-width="2.3"/>
<path d="M26.5,1025.7 L33.8,1025.7 L33.8,1047.5" fill="none" stroke="#ffffff" stroke-width="2.3"/>
<path d="M15.6,1067.2 L22.9,1067.2 L22.9,1089.1" fill="none" stroke="#ffffff" stroke-width="2.3"/>
<text transform="translate(24.99,1089.10) scale(1.0500,1)" font-family='"Liberation Sans"' font-size="32.71" fill="#ffffff" stroke="#171717" stroke-width="0.333">2</text>
<path d="M15.6,1113.0 L22.9,1113.0 L22.9,1134.8" fill="none" stroke="#ffffff" stroke-width="2.3"/>
<text transform="translate(25.56,1134.80) scale(1.0161,1)" font-family='"Liberation Sans"' font-size="32.71" fill="#ffffff" stroke="#171717" stroke-width="0.344">3</text>
<path d="M15.6,1154.5 L22.9,1154.5 L22.9,1176.3" fill="none" stroke="#ffffff" stroke-width="2.3"/>
<text transform="translate(26.01,1176.30) scale(1.1561,1)" font-family='"Liberation Sans"' font-size="32.71" fill="#ffffff" stroke="#171717" stroke-width="0.303">4</text>
<path d="M15.6,1196.5 L22.9,1196.5 L22.9,1218.3" fill="none" stroke="#ffffff" stroke-width="2.3"/>
<text transform="translate(25.56,1218.30) scale(1.0161,1)" font-family='"Liberation Sans"' font-size="32.71" fill="#ffffff" stroke="#171717" stroke-width="0.344">5</text>
<path d="M15.6,1238.5 L22.9,1238.5 L22.9,1260.4" fill="none" stroke="#ffffff" stroke-width="2.3"/>
<text transform="translate(24.94,1260.40) scale(1.0826,1)" font-family='"Liberation Sans"' font-size="32.71" fill="#ffffff" stroke="#171717" stroke-width="0.323">7</text>
<path d="M15.6,1279.5 L22.9,1279.5 L22.9,1301.4" fill="none" stroke="#ffffff" stroke-width="2.3"/>
<text transform="translate(25.41,1301.40) scale(1.1613,1)" font-family='"Liberation Sans"' font-size="32.71" fill="#ffffff" stroke="#171717" stroke-width="0.301">8</text>
<path d="M15.6,1321.2 L22.9,1321.2 L22.9,1343.0" fill="none" stroke="#ffffff" stroke-width="2.3"/>
<text transform="translate(24.83,1343.00) scale(1.1543,1)" font-family='"Liberation Sans"' font-size="32.71" fill="#ffffff" stroke="#171717" stroke-width="0.303">9</text>
<text transform="translate(14.02,1385.00) scale(1.0929,1)" font-family='"Liberation Sans"' font-size="32.71" fill="#ffffff" stroke="#171717" stroke-width="0.320">20</text>
<text transform="translate(14.08,1426.80) scale(1.0565,1)" font-family='"Liberation Sans"' font-size="32.71" fill="#ffffff" stroke="#171717" stroke-width="0.331">2</text>
<path d="M33.1,1405.0 L40.5,1405.0 L40.5,1426.8" fill="none" stroke="#ffffff" stroke-width="2.3"/>
<text transform="translate(14.15,1468.80) scale(1.0082,1)" font-family='"Liberation Sans"' font-size="32.71" fill="#ffffff" stroke="#171717" stroke-width="0.347">22</text>
<text transform="translate(14.15,1510.50) scale(1.0082,1)" font-family='"Liberation Sans"' font-size="32.71" fill="#ffffff" stroke="#171717" stroke-width="0.347">23</text>
<text transform="translate(79.59,672.30) scale(1.0661,1)" font-family='"Liberation Sans"' font-size="33.14" fill="#ffffff" font-weight="bold">Delegate rate</text>
<text transform="translate(725.24,672.30) scale(1.0423,1)" font-family='"Liberation Sans"' font-size="33.14" fill="#22244a" font-weight="bold">Estimated Attendee/Unit Cost</text>
<text transform="translate(1265.43,672.30) scale(1.0459,1)" font-family='"Liberation Sans"' font-size="33.14" fill="#22244a" font-weight="bold">Estimated Quantity</text>
<text transform="translate(1611.21,672.30) scale(1.0585,1)" font-family='"Liberation Sans"' font-size="33.14" fill="#22244a" font-weight="bold">Estimated Total</text>
<text transform="translate(1948.28,672.30) scale(1.0083,1)" font-family='"Liberation Sans"' font-size="33.14" fill="#22244a" font-weight="bold">Actual Unit Cost</text>
<text transform="translate(2249.47,672.30) scale(1.0332,1)" font-family='"Liberation Sans"' font-size="33.14" fill="#22244a" font-weight="bold">Actual Quantity</text>
<text transform="translate(2550.18,672.30)" font-family='"Liberation Sans"' font-size="33.14" fill="#22244a" font-weight="bold">A</text>
<text transform="translate(78.26,713.60) scale(1.0620,1)" font-family='"Liberation Sans"' font-size="33.00" fill="#ffffff" stroke="#232549" stroke-width="0.753">Early Bird Delegate Rate</text>
<text transform="translate(79.91,755.20) scale(1.0542,1)" font-family='"Liberation Sans"' font-size="33.00" fill="#ffffff" stroke="#232549" stroke-width="0.759">Standard Delegate Rate</text>
<text transform="translate(79.91,880.60) scale(1.0616,1)" font-family='"Liberation Sans"' font-size="33.00" fill="#ffffff" stroke="#232549" stroke-width="0.754">Small Exhibitor Stand</text>
<text transform="translate(78.19,922.30) scale(1.0903,1)" font-family='"Liberation Sans"' font-size="33.00" fill="#ffffff" stroke="#232549" stroke-width="0.734">Medium Exhibitor Stand</text>
<text transform="translate(78.25,964.10) scale(1.0671,1)" font-family='"Liberation Sans"' font-size="33.00" fill="#ffffff" stroke="#232549" stroke-width="0.750">Large Exhibitor Stand</text>
<text transform="translate(79.95,1005.70) scale(1.0215,1)" font-family='"Liberation Sans"' font-size="33.00" fill="#ffffff" stroke="#232549" stroke-width="0.783">Sponsorship Package 1</text>
<text transform="translate(79.92,1047.60) scale(1.0426,1)" font-family='"Liberation Sans"' font-size="33.00" fill="#ffffff" stroke="#232549" stroke-width="0.767">Sponsorship Package 2</text>
<text transform="translate(79.92,1089.30) scale(1.0426,1)" font-family='"Liberation Sans"' font-size="33.00" fill="#ffffff" stroke="#232549" stroke-width="0.767">Sponsorship Package 3</text>
<text transform="translate(79.98,838.50) scale(1.0031,1)" font-family='"Liberation Sans"' font-size="33.14" fill="#ffffff" font-weight="bold">Sponsorship and Exhibitor Packages</text>
<path d="M726.5,712.9 L744.6,712.9 M731.0,712.9 L731.0,699.4 Q731.0,692.7 737.5,692.7 Q742.0,692.7 744.3,694.6 M726.5,702.6 L740.7,702.6" fill="none" stroke="#22244a" stroke-width="2.1"/>
<text transform="translate(1144.71,713.60) scale(1.1020,1)" font-family='"Liberation Sans"' font-size="31.72" fill="#22244a" stroke="#c8c9e5" stroke-width="0.726">50.00</text>
<text transform="translate(1497.92,713.60) scale(1.0506,1)" font-family='"Liberation Sans"' font-size="31.72" fill="#22244a" stroke="#c8c9e5" stroke-width="0.761">100.00</text>
<path d="M1623.1,712.9 L1641.2,712.9 M1627.6,712.9 L1627.6,699.4 Q1627.6,692.7 1634.1,692.7 Q1638.6,692.7 1640.9,694.6 M1623.1,702.6 L1637.3,702.6" fill="none" stroke="#22244a" stroke-width="2.1"/>
<text transform="translate(1778.91,713.60) scale(1.1029,1)" font-family='"Liberation Sans"' font-size="31.72" fill="#22244a" stroke="#c8c9e5" stroke-width="0.725">5,000.00</text>
<path d="M1948.7,712.9 L1966.8,712.9 M1953.2,712.9 L1953.2,699.4 Q1953.2,692.7 1959.7,692.7 Q1964.2,692.7 1966.5,694.6 M1948.7,702.6 L1962.9,702.6" fill="none" stroke="#22244a" stroke-width="2.1"/>
<text transform="translate(2128.91,713.60) scale(1.0956,1)" font-family='"Liberation Sans"' font-size="31.72" fill="#22244a" stroke="#9497c9" stroke-width="0.730">50.00</text>
<text transform="translate(2429.50,713.60) scale(1.0113,1)" font-family='"Liberation Sans"' font-size="31.72" fill="#22244a" stroke="#9497c9" stroke-width="0.791">150.00</text>
<path d="M2551.8,712.9 L2569.9,712.9 M2556.3,712.9 L2556.3,699.4 Q2556.3,692.7 2562.8,692.7 Q2567.3,692.7 2569.6,694.6 M2551.8,702.6 L2566.0,702.6" fill="none" stroke="#22244a" stroke-width="2.1"/>
<path d="M726.5,754.5 L744.6,754.5 M731.0,754.5 L731.0,741.0 Q731.0,734.3 737.5,734.3 Q742.0,734.3 744.3,736.2 M726.5,744.2 L740.7,744.2" fill="none" stroke="#22244a" stroke-width="2.1"/>
<text transform="translate(1148.02,755.20) scale(1.0598,1)" font-family='"Liberation Sans"' font-size="31.72" fill="#22244a" stroke="#c8c9e5" stroke-width="0.755">75.00</text>
<text transform="translate(1491.13,755.20) scale(1.1211,1)" font-family='"Liberation Sans"' font-size="31.72" fill="#22244a" stroke="#c8c9e5" stroke-width="0.714">200.00</text>
<path d="M1623.1,754.5 L1641.2,754.5 M1627.6,754.5 L1627.6,741.0 Q1627.6,734.3 1634.1,734.3 Q1638.6,734.3 1640.9,736.2 M1623.1,744.2 L1637.3,744.2" fill="none" stroke="#22244a" stroke-width="2.1"/>
<text transform="translate(1768.34,755.20) scale(1.0396,1)" font-family='"Liberation Sans"' font-size="31.72" fill="#22244a" stroke="#c8c9e5" stroke-width="0.770">15,000.00</text>
<path d="M1948.7,754.5 L1966.8,754.5 M1953.2,754.5 L1953.2,741.0 Q1953.2,734.3 1959.7,734.3 Q1964.2,734.3 1966.5,736.2 M1948.7,744.2 L1962.9,744.2" fill="none" stroke="#22244a" stroke-width="2.1"/>
<text transform="translate(2131.32,755.20) scale(1.0650,1)" font-family='"Liberation Sans"' font-size="31.72" fill="#22244a" stroke="#9497c9" stroke-width="0.751">75.00</text>
<text transform="translate(2425.31,755.20) scale(1.0548,1)" font-family='"Liberation Sans"' font-size="31.72" fill="#22244a" stroke="#9497c9" stroke-width="0.758">100.00</text>
<path d="M2551.8,754.5 L2569.9,754.5 M2556.3,754.5 L2556.3,741.0 Q2556.3,734.3 2562.8,734.3 Q2567.3,734.3 2569.6,736.2 M2551.8,744.2 L2566.0,744.2" fill="none" stroke="#22244a" stroke-width="2.1"/>
<path d="M726.5,879.9 L744.6,879.9 M731.0,879.9 L731.0,866.4 Q731.0,859.7 737.5,859.7 Q742.0,859.7 744.3,861.6 M726.5,869.6 L740.7,869.6" fill="none" stroke="#22244a" stroke-width="2.1"/>
<text transform="translate(1098.79,880.60) scale(1.0802,1)" font-family='"Liberation Sans"' font-size="31.72" fill="#22244a" stroke="#c8c9e5" stroke-width="0.741">2,500.00</text>
<text transform="translate(1532.73,880.60) scale(1.0793,1)" font-family='"Liberation Sans"' font-size="31.72" fill="#22244a" stroke="#c8c9e5" stroke-width="0.741">3.00</text>
<path d="M1623.1,879.9 L1641.2,879.9 M1627.6,879.9 L1627.6,866.4 Q1627.6,859.7 1634.1,859.7 Q1638.6,859.7 1640.9,861.6 M1623.1,869.6 L1637.3,869.6" fill="none" stroke="#22244a" stroke-width="2.1"/>
<text transform="translate(1781.80,880.60) scale(1.0794,1)" font-family='"Liberation Sans"' font-size="31.72" fill="#22244a" stroke="#c8c9e5" stroke-width="0.741">7,500.00</text>
<path d="M1948.7,879.9 L1966.8,879.9 M1953.2,879.9 L1953.2,866.4 Q1953.2,859.7 1959.7,859.7 Q1964.2,859.7 1966.5,861.6 M1948.7,869.6 L1962.9,869.6" fill="none" stroke="#22244a" stroke-width="2.1"/>
<text transform="translate(2087.15,880.60) scale(1.0414,1)" font-family='"Liberation Sans"' font-size="31.72" fill="#22244a" stroke="#9497c9" stroke-width="0.768">2,250.00</text>
<text transform="translate(2460.93,880.60) scale(1.0760,1)" font-family='"Liberation Sans"' font-size="31.72" fill="#22244a" stroke="#9497c9" stroke-width="0.744">3.00</text>
<path d="M2551.8,879.9 L2569.9,879.9 M2556.3,879.9 L2556.3,866.4 Q2556.3,859.7 2562.8,859.7 Q2567.3,859.7 2569.6,861.6 M2551.8,869.6 L2566.0,869.6" fill="none" stroke="#22244a" stroke-width="2.1"/>
<path d="M726.5,921.6 L744.6,921.6 M731.0,921.6 L731.0,908.1 Q731.0,901.4 737.5,901.4 Q742.0,901.4 744.3,903.3 M726.5,911.3 L740.7,911.3" fill="none" stroke="#22244a" stroke-width="2.1"/>
<text transform="translate(1099.33,922.30) scale(1.0758,1)" font-family='"Liberation Sans"' font-size="31.72" fill="#22244a" stroke="#c8c9e5" stroke-width="0.744">3,500.00</text>
<text transform="translate(1530.65,922.30) scale(1.1135,1)" font-family='"Liberation Sans"' font-size="31.72" fill="#22244a" stroke="#c8c9e5" stroke-width="0.718">4.00</text>
<path d="M1623.1,921.6 L1641.2,921.6 M1627.6,921.6 L1627.6,908.1 Q1627.6,901.4 1634.1,901.4 Q1638.6,901.4 1640.9,903.3 M1623.1,911.3 L1637.3,911.3" fill="none" stroke="#22244a" stroke-width="2.1"/>
<text transform="translate(1763.27,922.30) scale(1.0758,1)" font-family='"Liberation Sans"' font-size="31.72" fill="#22244a" stroke="#c8c9e5" stroke-width="0.744">14,000.00</text>
<path d="M1948.7,921.6 L1966.8,921.6 M1953.2,921.6 L1953.2,908.1 Q1953.2,901.4 1959.7,901.4 Q1964.2,901.4 1966.5,903.3 M1948.7,911.3 L1962.9,911.3" fill="none" stroke="#22244a" stroke-width="2.1"/>
<text transform="translate(2083.64,922.30) scale(1.0701,1)" font-family='"Liberation Sans"' font-size="31.72" fill="#22244a" stroke="#9497c9" stroke-width="0.748">3,500.00</text>
<text transform="translate(2458.75,922.30) scale(1.1118,1)" font-family='"Liberation Sans"' font-size="31.72" fill="#22244a" stroke="#9497c9" stroke-width="0.720">4.00</text>
<path d="M2551.8,921.6 L2569.9,921.6 M2556.3,921.6 L2556.3,908.1 Q2556.3,901.4 2562.8,901.4 Q2567.3,901.4 2569.6,903.3 M2551.8,911.3 L2566.0,911.3" fill="none" stroke="#22244a" stroke-width="2.1"/>
<path d="M726.5,963.4 L744.6,963.4 M731.0,963.4 L731.0,949.9 Q731.0,943.2 737.5,943.2 Q742.0,943.2 744.3,945.1 M726.5,953.1 L740.7,953.1" fill="none" stroke="#22244a" stroke-width="2.1"/>
<text transform="translate(1096.76,964.10) scale(1.0968,1)" font-family='"Liberation Sans"' font-size="31.72" fill="#22244a" stroke="#c8c9e5" stroke-width="0.729">4,500.00</text>
<text transform="translate(1532.73,964.10) scale(1.0793,1)" font-family='"Liberation Sans"' font-size="31.72" fill="#22244a" stroke="#c8c9e5" stroke-width="0.741">5.00</text>
<path d="M1623.1,963.4 L1641.2,963.4 M1627.6,963.4 L1627.6,949.9 Q1627.6,943.2 1634.1,943.2 Q1638.6,943.2 1640.9,945.1 M1623.1,953.1 L1637.3,953.1" fill="none" stroke="#22244a" stroke-width="2.1"/>
<text transform="translate(1762.69,964.10) scale(1.0798,1)" font-family='"Liberation Sans"' font-size="31.72" fill="#22244a" stroke="#c8c9e5" stroke-width="0.741">22,500.00</text>
<path d="M1948.7,963.4 L1966.8,963.4 M1953.2,963.4 L1953.2,949.9 Q1953.2,943.2 1959.7,943.2 Q1964.2,943.2 1966.5,945.1 M1948.7,953.1 L1962.9,953.1" fill="none" stroke="#22244a" stroke-width="2.1"/>
<text transform="translate(2084.67,964.10) scale(1.0616,1)" font-family='"Liberation Sans"' font-size="31.72" fill="#22244a" stroke="#9497c9" stroke-width="0.754">4,250.00</text>
<text transform="translate(2460.93,964.10) scale(1.0760,1)" font-family='"Liberation Sans"' font-size="31.72" fill="#22244a" stroke="#9497c9" stroke-width="0.744">5.00</text>
<path d="M2551.8,963.4 L2569.9,963.4 M2556.3,963.4 L2556.3,949.9 Q2556.3,943.2 2562.8,943.2 Q2567.3,943.2 2569.6,945.1 M2551.8,953.1 L2566.0,953.1" fill="none" stroke="#22244a" stroke-width="2.1"/>
<path d="M726.5,1005.0 L744.6,1005.0 M731.0,1005.0 L731.0,991.5 Q731.0,984.8 737.5,984.8 Q742.0,984.8 744.3,986.7 M726.5,994.7 L740.7,994.7" fill="none" stroke="#22244a" stroke-width="2.1"/>
<text transform="translate(1081.28,1005.70) scale(1.0692,1)" font-family='"Liberation Sans"' font-size="31.72" fill="#22244a" stroke="#c8c9e5" stroke-width="0.748">10,000.00</text>
<text transform="translate(1532.73,1005.70) scale(1.0793,1)" font-family='"Liberation Sans"' font-size="31.72" fill="#22244a" stroke="#c8c9e5" stroke-width="0.741">3.00</text>
<path d="M1623.1,1005.0 L1641.2,1005.0 M1627.6,1005.0 L1627.6,991.5 Q1627.6,984.8 1634.1,984.8 Q1638.6,984.8 1640.9,986.7 M1623.1,994.7 L1637.3,994.7" fill="none" stroke="#22244a" stroke-width="2.1"/>
<text transform="translate(1758.10,1005.70) scale(1.1126,1)" font-family='"Liberation Sans"' font-size="31.72" fill="#22244a" stroke="#c8c9e5" stroke-width="0.719">30,000.00</text>
<path d="M1948.7,1005.0 L1966.8,1005.0 M1953.2,1005.0 L1953.2,991.5 Q1953.2,984.8 1959.7,984.8 Q1964.2,984.8 1966.5,986.7 M1948.7,994.7 L1962.9,994.7" fill="none" stroke="#22244a" stroke-width="2.1"/>
<text transform="translate(2069.34,1005.70) scale(1.0374,1)" font-family='"Liberation Sans"' font-size="31.72" fill="#22244a" stroke="#9497c9" stroke-width="0.771">12,000.00</text>
<text transform="translate(2460.93,1005.70) scale(1.0760,1)" font-family='"Liberation Sans"' font-size="31.72" fill="#22244a" stroke="#9497c9" stroke-width="0.744">3.00</text>
<path d="M2551.8,1005.0 L2569.9,1005.0 M2556.3,1005.0 L2556.3,991.5 Q2556.3,984.8 2562.8,984.8 Q2567.3,984.8 2569.6,986.7 M2551.8,994.7 L2566.0,994.7" fill="none" stroke="#22244a" stroke-width="2.1"/>
<path d="M726.5,1046.9 L744.6,1046.9 M731.0,1046.9 L731.0,1033.4 Q731.0,1026.7 737.5,1026.7 Q742.0,1026.7 744.3,1028.6 M726.5,1036.6 L740.7,1036.6" fill="none" stroke="#22244a" stroke-width="2.1"/>
<text transform="translate(1083.92,1047.60) scale(1.0504,1)" font-family='"Liberation Sans"' font-size="31.72" fill="#22244a" stroke="#c8c9e5" stroke-width="0.762">15,000.00</text>
<text transform="translate(1530.65,1047.60) scale(1.1135,1)" font-family='"Liberation Sans"' font-size="31.72" fill="#22244a" stroke="#c8c9e5" stroke-width="0.718">4.00</text>
<path d="M1623.1,1046.9 L1641.2,1046.9 M1627.6,1046.9 L1627.6,1033.4 Q1627.6,1026.7 1634.1,1026.7 Q1638.6,1026.7 1640.9,1028.6 M1623.1,1036.6 L1637.3,1036.6" fill="none" stroke="#22244a" stroke-width="2.1"/>
<text transform="translate(1755.92,1047.60) scale(1.1281,1)" font-family='"Liberation Sans"' font-size="31.72" fill="#22244a" stroke="#c8c9e5" stroke-width="0.709">60,000.00</text>
<path d="M1948.7,1046.9 L1966.8,1046.9 M1953.2,1046.9 L1953.2,1033.4 Q1953.2,1026.7 1959.7,1026.7 Q1964.2,1026.7 1966.5,1028.6 M1948.7,1036.6 L1962.9,1036.6" fill="none" stroke="#22244a" stroke-width="2.1"/>
<text transform="translate(2066.71,1047.60) scale(1.0562,1)" font-family='"Liberation Sans"' font-size="31.72" fill="#22244a" stroke="#9497c9" stroke-width="0.757">16,000.00</text>
<text transform="translate(2458.75,1047.60) scale(1.1118,1)" font-family='"Liberation Sans"' font-size="31.72" fill="#22244a" stroke="#9497c9" stroke-width="0.720">4.00</text>
<path d="M2551.8,1046.9 L2569.9,1046.9 M2556.3,1046.9 L2556.3,1033.4 Q2556.3,1026.7 2562.8,1026.7 Q2567.3,1026.7 2569.6,1028.6 M2551.8,1036.6 L2566.0,1036.6" fill="none" stroke="#22244a" stroke-width="2.1"/>
<path d="M726.5,1088.6 L744.6,1088.6 M731.0,1088.6 L731.0,1075.1 Q731.0,1068.4 737.5,1068.4 Q742.0,1068.4 744.3,1070.3 M726.5,1078.3 L740.7,1078.3" fill="none" stroke="#22244a" stroke-width="2.1"/>
<text transform="translate(1074.03,1089.30) scale(1.1209,1)" font-family='"Liberation Sans"' font-size="31.72" fill="#22244a" stroke="#c8c9e5" stroke-width="0.714">20,000.00</text>
<text transform="translate(1532.73,1089.30) scale(1.0793,1)" font-family='"Liberation Sans"' font-size="31.72" fill="#22244a" stroke="#c8c9e5" stroke-width="0.741">5.00</text>
<path d="M1623.1,1088.6 L1641.2,1088.6 M1627.6,1088.6 L1627.6,1075.1 Q1627.6,1068.4 1634.1,1068.4 Q1638.6,1068.4 1640.9,1070.3 M1623.1,1078.3 L1637.3,1078.3" fill="none" stroke="#22244a" stroke-width="2.1"/>
<text transform="translate(1742.65,1089.30) scale(1.0862,1)" font-family='"Liberation Sans"' font-size="31.72" fill="#22244a" stroke="#c8c9e5" stroke-width="0.737">100,000.00</text>
<path d="M1948.7,1088.6 L1966.8,1088.6 M1953.2,1088.6 L1953.2,1075.1 Q1953.2,1068.4 1959.7,1068.4 Q1964.2,1068.4 1966.5,1070.3 M1948.7,1078.3 L1962.9,1078.3" fill="none" stroke="#22244a" stroke-width="2.1"/>
<text transform="translate(2066.71,1089.30) scale(1.0562,1)" font-family='"Liberation Sans"' font-size="31.72" fill="#22244a" stroke="#9497c9" stroke-width="0.757">18,000.00</text>
<text transform="translate(2460.93,1089.30) scale(1.0760,1)" font-family='"Liberation Sans"' font-size="31.72" fill="#22244a" stroke="#9497c9" stroke-width="0.744">5.00</text>
<path d="M2551.8,1088.6 L2569.9,1088.6 M2556.3,1088.6 L2556.3,1075.1 Q2556.3,1068.4 2562.8,1068.4 Q2567.3,1068.4 2569.6,1070.3 M2551.8,1078.3 L2566.0,1078.3" fill="none" stroke="#22244a" stroke-width="2.1"/>
<path d="M1629.2,794.2 L1629.2,782.2 Q1629.2,775.5 1635.9,775.5 Q1640.4,775.5 1642.6,777.6" fill="none" stroke="#22244a" stroke-width="4.9"/><rect x="1623.6" y="792.1" width="19.2" height="4.1" fill="#22244a"/><rect x="1623.6" y="783.3" width="15.8" height="3" fill="#22244a"/>
<text transform="translate(1757.59,796.00) scale(1.1102,1)" font-family='"Liberation Sans"' font-size="32.00" fill="#22244a" font-weight="bold">20,000.00</text>
<path d="M2557.9,794.2 L2557.9,782.2 Q2557.9,775.5 2564.6,775.5 Q2569.1,775.5 2571.3,777.6" fill="none" stroke="#22244a" stroke-width="4.9"/><rect x="2552.3" y="792.1" width="19.2" height="4.1" fill="#22244a"/><rect x="2552.3" y="783.3" width="15.8" height="3" fill="#22244a"/>
<path d="M1629.2,1129.1 L1629.2,1117.1 Q1629.2,1110.4 1635.9,1110.4 Q1640.4,1110.4 1642.6,1112.5" fill="none" stroke="#22244a" stroke-width="4.9"/><rect x="1623.6" y="1127.0" width="19.2" height="4.1" fill="#22244a"/><rect x="1623.6" y="1118.2" width="15.8" height="3" fill="#22244a"/>
<text transform="translate(1739.60,1130.90) scale(1.0991,1)" font-family='"Liberation Sans"' font-size="32.00" fill="#22244a" font-weight="bold">234,000.00</text>
<path d="M2557.9,1129.1 L2557.9,1117.1 Q2557.9,1110.4 2564.6,1110.4 Q2569.1,1110.4 2571.3,1112.5" fill="none" stroke="#22244a" stroke-width="4.9"/><rect x="2552.3" y="1127.0" width="19.2" height="4.1" fill="#22244a"/><rect x="2552.3" y="1118.2" width="15.8" height="3" fill="#22244a"/>
<text transform="translate(714.81,1177.00) scale(1.0559,1)" font-family='"Liberation Sans"' font-size="33.14" fill="#22244a" font-weight="bold">Estimated</text>
<text transform="translate(1255.47,1177.00) scale(1.0294,1)" font-family='"Liberation Sans"' font-size="33.14" fill="#22244a" font-weight="bold">Actual</text>
<text transform="translate(1612.90,1177.00) scale(1.0398,1)" font-family='"Liberation Sans"' font-size="33.14" fill="#ffffff" font-weight="bold">Variance</text>
<text transform="translate(384.30,1218.60) scale(1.0595,1)" font-family='"Liberation Sans"' font-size="33.14" fill="#ffffff" font-weight="bold">Total (Without VAT)</text>
<text transform="translate(440.00,1259.60) scale(1.0550,1)" font-family='"Liberation Sans"' font-size="33.14" fill="#ffffff" font-weight="bold">Total (With VAT)</text>
<path d="M732.2,1216.8 L732.2,1204.8 Q732.2,1198.1 738.9,1198.1 Q743.4,1198.1 745.6,1200.2" fill="none" stroke="#22244a" stroke-width="4.9"/><rect x="726.6" y="1214.7" width="19.2" height="4.1" fill="#22244a"/><rect x="726.6" y="1205.9" width="15.8" height="3" fill="#22244a"/>
<text transform="translate(1054.89,1218.60) scale(1.1086,1)" font-family='"Liberation Sans"' font-size="32.00" fill="#22244a" font-weight="bold">254,000.00</text>
<path d="M1272.3,1216.8 L1272.3,1204.8 Q1272.3,1198.1 1279.0,1198.1 Q1283.5,1198.1 1285.7,1200.2" fill="none" stroke="#22244a" stroke-width="4.9"/><rect x="1266.7" y="1214.7" width="19.2" height="4.1" fill="#22244a"/><rect x="1266.7" y="1205.9" width="15.8" height="3" fill="#22244a"/>
<text transform="translate(1413.60,1218.60) scale(1.1022,1)" font-family='"Liberation Sans"' font-size="32.00" fill="#22244a" font-weight="bold">247,000.00</text>
<path d="M1629.2,1216.8 L1629.2,1204.8 Q1629.2,1198.1 1635.9,1198.1 Q1640.4,1198.1 1642.6,1200.2" fill="none" stroke="#ffffff" stroke-width="4.9"/><rect x="1623.6" y="1214.7" width="19.2" height="4.1" fill="#ffffff"/><rect x="1623.6" y="1205.9" width="15.8" height="3" fill="#ffffff"/>
<text transform="translate(1766.15,1218.60) scale(1.0997,1)" font-family='"Liberation Sans"' font-size="32.00" fill="#ffffff" font-weight="bold">(7,000.00)</text>
<path d="M732.2,1257.8 L732.2,1245.8 Q732.2,1239.1 738.9,1239.1 Q743.4,1239.1 745.6,1241.2" fill="none" stroke="#22244a" stroke-width="4.9"/><rect x="726.6" y="1255.7" width="19.2" height="4.1" fill="#22244a"/><rect x="726.6" y="1246.9" width="15.8" height="3" fill="#22244a"/>
<text transform="translate(1055.45,1259.60) scale(1.1051,1)" font-family='"Liberation Sans"' font-size="32.00" fill="#22244a" font-weight="bold">304,800.00</text>
<path d="M1272.3,1257.8 L1272.3,1245.8 Q1272.3,1239.1 1279.0,1239.1 Q1283.5,1239.1 1285.7,1241.2" fill="none" stroke="#22244a" stroke-width="4.9"/><rect x="1266.7" y="1255.7" width="19.2" height="4.1" fill="#22244a"/><rect x="1266.7" y="1246.9" width="15.8" height="3" fill="#22244a"/>
<text transform="translate(1413.60,1259.60) scale(1.1022,1)" font-family='"Liberation Sans"' font-size="32.00" fill="#22244a" font-weight="bold">296,400.00</text>
<path d="M1629.2,1257.8 L1629.2,1245.8 Q1629.2,1239.1 1635.9,1239.1 Q1640.4,1239.1 1642.6,1241.2" fill="none" stroke="#ffffff" stroke-width="4.9"/><rect x="1623.6" y="1255.7" width="19.2" height="4.1" fill="#ffffff"/><rect x="1623.6" y="1246.9" width="15.8" height="3" fill="#ffffff"/>
<text transform="translate(1766.15,1259.60) scale(1.0997,1)" font-family='"Liberation Sans"' font-size="32.00" fill="#ffffff" font-weight="bold">(8,400.00)</text>
<path d="M1231.5,682.4 L1249.0,682.4 L1249.0,699.9 Z" fill="#e8301c"/>
<path d="M1588.2,682.4 L1605.7,682.4 L1605.7,699.9 Z" fill="#e8301c"/>
<path d="M1914.5,682.4 L1932.0,682.4 L1932.0,699.9 Z" fill="#e8301c"/>
<path d="M2216.1,682.4 L2233.6,682.4 L2233.6,699.9 Z" fill="#e8301c"/>
<path d="M2517.5,682.4 L2535.0,682.4 L2535.0,699.9 Z" fill="#e8301c"/>
<path d="M1914.5,765.6 L1932.0,765.6 L1932.0,783.1 Z" fill="#e8301c"/>
<path d="M1232.0,1187.6 L1249.0,1187.6 L1249.0,1204.6 Z" fill="#e8301c"/>
<path d="M1232.5,1229.5 L1249.0,1229.5 L1249.0,1246.0 Z" fill="#e8301c"/>
<path d="M1588.7,1187.6 L1605.7,1187.6 L1605.7,1204.6 Z" fill="#e8301c"/>
<path d="M1589.2,1229.5 L1605.7,1229.5 L1605.7,1246.0 Z" fill="#e8301c"/>
<path d="M1915.0,1187.6 L1932.0,1187.6 L1932.0,1204.6 Z" fill="#e8301c"/>
<path d="M1915.5,1229.5 L1932.0,1229.5 L1932.0,1246.0 Z" fill="#e8301c"/>
<rect x="1605.2" y="1227" width="328.5" height="43.7" fill="none" stroke="#2e6e3a" stroke-width="3.5"/>
<rect x="1608.2" y="1230" width="322.5" height="37.7" fill="none" stroke="#ffffff" stroke-width="2"/>
<rect x="1926.40" y="1263.50" width="11.00" height="11.50" fill="#ffffff" />
<rect x="1928.00" y="1265.00" width="8.00" height="8.50" fill="#2e6e3a" />
<path d="M168.3,465.8 A38.4,38.4 0 1 0 196.8,529.9" fill="none" stroke="#ffffff" stroke-width="17.4"/>
<rect x="166.00" y="457.00" width="80.00" height="17.30" fill="#ffffff" />
<rect x="174.00" y="405.70" width="17.00" height="102.30" fill="#ffffff" />
<path d="M174,405.7 L208,405.7 A34.3,34.3 0 0 1 208,474.3 L191,474.3 L191,457 L208,457 A16.75,16.75 0 0 0 208,423.5 L174,423.5 Z" fill="#ffffff"/>
<rect x="209.60" y="470.00" width="17.40" height="77.40" fill="#ffffff" />
<path d="M227,457 L244.5,457 A33.75,33.75 0 0 1 244.5,524.5 L227,524.5 L227,508 L244.5,508 A17,17 0 0 0 244.5,474 L227,474 Z" fill="#ffffff"/>
<path d="M245.5,524.5 L262,518 Q272,538 291.8,541 L291.8,558.6 Q258,556 245.5,524.5 Z" fill="#ffffff"/>
<text transform="translate(140.51,594.20) scale(0.8036,1)" font-family='"Liberation Sans"' font-size="28.44" fill="#ffffff" stroke="#232549" stroke-width="1.120">E</text>
<text transform="translate(166.40,594.20) scale(0.8686,1)" font-family='"Liberation Sans"' font-size="28.44" fill="#ffffff" stroke="#232549" stroke-width="1.036">V</text>
<text transform="translate(187.93,594.20) scale(0.7971,1)" font-family='"Liberation Sans"' font-size="28.44" fill="#ffffff" stroke="#232549" stroke-width="1.129">E</text>
<text transform="translate(209.34,594.20) scale(1.0188,1)" font-family='"Liberation Sans"' font-size="28.44" fill="#ffffff" stroke="#232549" stroke-width="0.883">N</text>
<text transform="translate(235.79,594.20) scale(0.9243,1)" font-family='"Liberation Sans"' font-size="28.44" fill="#ffffff" stroke="#232549" stroke-width="0.974">T</text>
<text transform="translate(256.95,594.20) scale(0.8408,1)" font-family='"Liberation Sans"' font-size="28.44" fill="#ffffff" stroke="#232549" stroke-width="1.070">S</text>
<rect x="326.70" y="453.70" width="18.90" height="94.60" fill="#ffffff" />
<path d="M368.6,548.3 L368.6,475.3 L386.5,475.3 L386.5,484 Q395,474.3 412,474.3 Q440.6,475.3 440.6,505 L440.6,548.3 L423.2,548.3 L423.2,508 Q423.2,489.7 405,489.7 Q386.5,489.7 386.5,510 L386.5,548.3 Z" fill="#ffffff"/>
<ellipse cx="492.3" cy="512.5" rx="37" ry="37.2" fill="#ffffff"/><ellipse cx="493.3" cy="512.5" rx="19.2" ry="22.6" fill="#232549"/>
<path d="M492.3,512.5 L537.3,483.5 L537.3,541.5 Z" fill="#232549"/>
<ellipse cx="572.8" cy="512.5" rx="39.2" ry="37.2" fill="#ffffff"/><ellipse cx="572.5" cy="512.1" rx="21" ry="22.4" fill="#232549"/>
<path d="M627,548.3 L627,475.3 L643.6,475.3 L643.6,484 Q651,474.3 665,474.3 Q683,474.3 688,488 Q696,474.3 713,474.3 Q747.5,475.3 747.5,505 L747.5,548.3 L730,548.3 L730,508 Q730,489.7 713,489.7 Q695.9,489.7 695.9,510 L695.9,548.3 L678.4,548.3 L678.4,508 Q678.4,489.7 661,489.7 Q643.6,489.7 643.6,510 L643.6,548.3 Z" fill="#ffffff"/>
<ellipse cx="798.9" cy="512.5" rx="36.9" ry="37.2" fill="#ffffff"/><ellipse cx="799.4" cy="512.5" rx="19" ry="22.4" fill="#232549"/>
<path d="M798.9,518.0 L843.9,518.0 L843.9,545.5 Z" fill="#232549"/>
<rect x="770.00" y="505.50" width="65.80" height="12.50" fill="#ffffff" />
</svg></body></html>
